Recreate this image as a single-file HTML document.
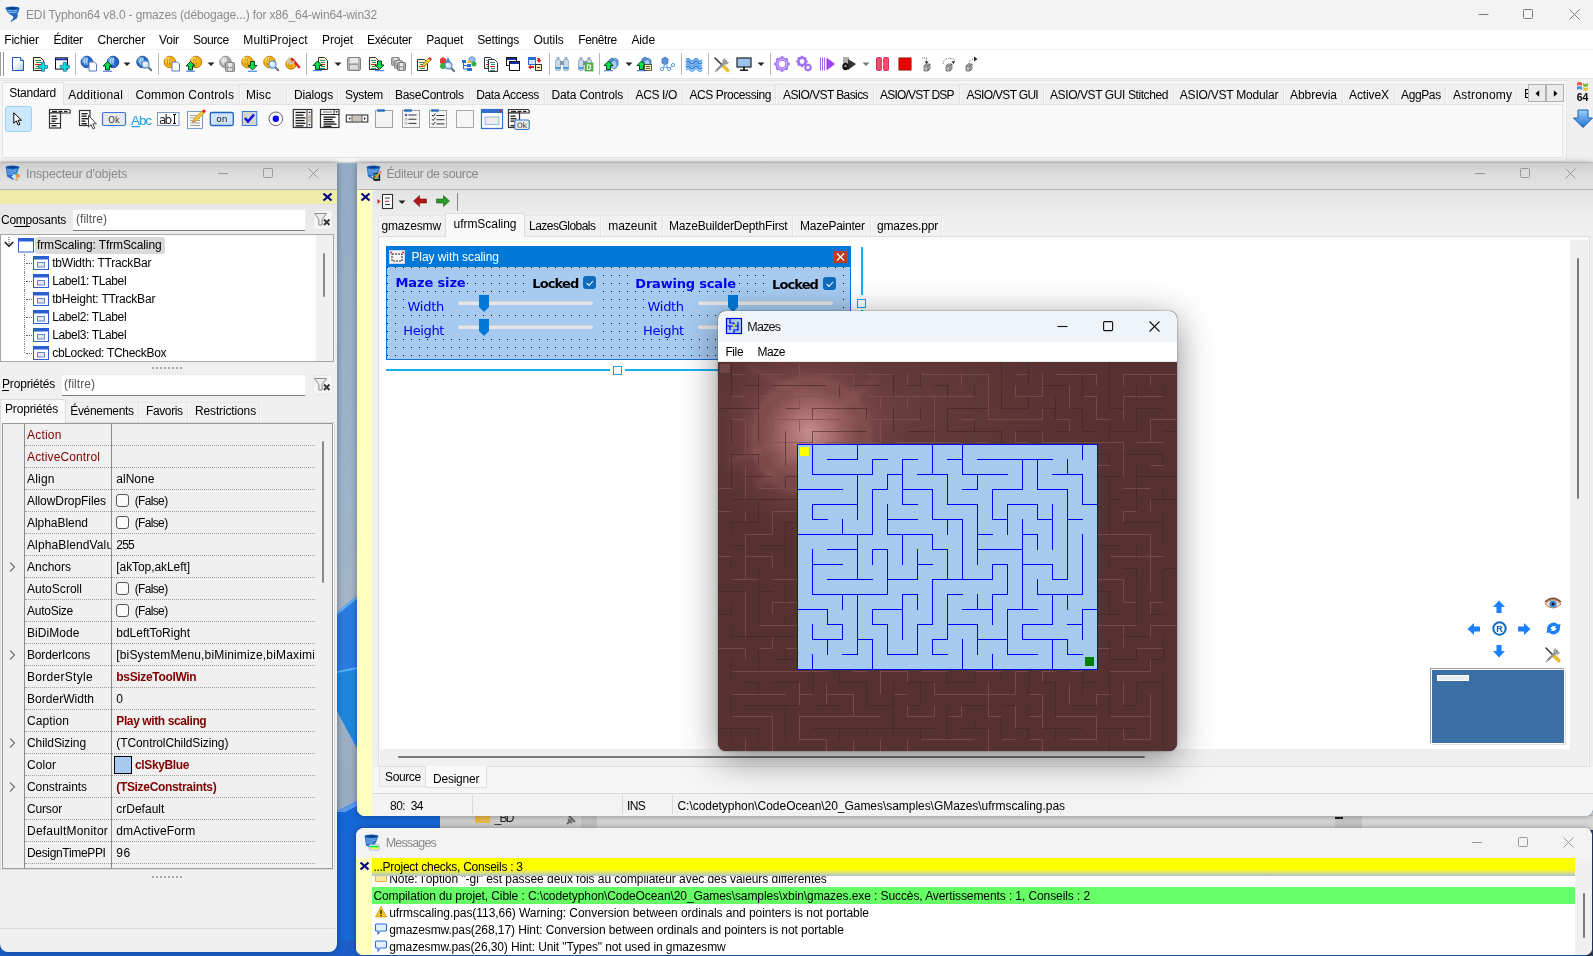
<!DOCTYPE html>
<html><head><meta charset="utf-8"><title>EDI Typhon64</title>
<style>
html,body{margin:0;padding:0;}
body{width:1593px;height:956px;overflow:hidden;position:relative;background:#9db4c8;font-family:"Liberation Sans",sans-serif;font-size:12px;}
#r{position:absolute;left:0;top:0;width:1593px;height:956px;overflow:hidden;will-change:transform;}
#r div,#r span,#r svg{position:absolute;box-sizing:border-box;}
#r span{white-space:pre;}
#r svg{overflow:visible;}
</style></head><body><div id="r">
<div style="left:0px;top:160px;width:1593px;height:796px;background:linear-gradient(180deg,#94acc4 0%,#9cb3c9 40%,#a3b4c6 55%,#8fa6be 100%);"></div>
<svg style="left:330px;top:560px;" width="40" height="400" viewBox="0 0 40 400"><polygon points="7,52 27,36 27,188 7,151" fill="#2a7be0"/><polygon points="7,112 27,108 27,188 7,151" fill="#1f86dd"/><polygon points="7,52 27,36 27,39 7,55" fill="#62aaf0"/><polygon points="7,111 27,107 27,109 7,113" fill="#5ab0f0"/><polygon points="7,251 27,241 27,400 7,400" fill="#1767d6"/><polygon points="7,251 27,241 27,246 7,256" fill="#5a9ae6"/></svg>
<div style="left:337px;top:812px;width:110px;height:20px;background:#1566d6;"></div>
<div style="left:0px;top:940px;width:1593px;height:16px;background:#1c5fc8;"></div>
<div style="left:1586px;top:826px;width:7px;height:130px;background:#2a3a5a;"></div>
<div style="left:440px;top:812px;width:1153px;height:18px;background:#d4d4d4;"></div>
<div style="left:440px;top:812px;width:141px;height:18px;background:#cecece;"></div>
<div style="left:581px;top:812px;width:16px;height:18px;background:#c2c2c2;"></div>
<div style="left:1335px;top:812px;width:27px;height:18px;background:#c6c6c6;"></div>
<div style="left:1362px;top:815px;width:231px;height:13px;background:#d8d8d8;border-top:1px solid #bbb;"></div>
<svg style="left:475px;top:810px;" width="15" height="14" viewBox="0 0 15 14"><path d="M0 0h6l2 2h7v11H0z" fill="#e8b84a"/></svg>
<span style="left:494.7px;top:810.84px;font-size:12px;line-height:14px;color:#222;letter-spacing:-1.781px;">_BD</span>
<svg style="left:565px;top:814px;" width="12" height="12" viewBox="0 0 12 12"><path d="M2 10L6 6M4 2l6 6M3 5l4 4" stroke="#666" stroke-width="2" fill="none"/></svg>
<div style="left:1335px;top:817px;width:8px;height:2px;background:#222;"></div>
<div style="left:0px;top:0px;width:1593px;height:163px;background:#f5f5f5;"></div>
<div style="left:0px;top:0px;width:1593px;height:30px;background:#f3f3f3;"></div>
<div style="left:0px;top:30px;width:1593px;height:19px;background:#fff;"></div>
<div style="left:0px;top:49px;width:1593px;height:1px;background:#f0f0f0;"></div>
<div style="left:0px;top:50px;width:1593px;height:28px;background:#fff;"></div>
<div style="left:0px;top:78px;width:1593px;height:1px;background:#e3e3e3;"></div>
<div style="left:0px;top:79px;width:1593px;height:84px;background:#f0f0f0;"></div>
<div style="left:0px;top:80px;width:1567px;height:82px;background:#f5f5f5;border:1px solid #e6e6e6;border-left:none;"></div>
<div style="left:0px;top:162px;width:1593px;height:1px;background:#d4d4d4;"></div>
<svg style="left:5px;top:5.5px;" width="16" height="17" viewBox="0 0 16 17"><defs><linearGradient id="tg" x1="0" y1="0" x2="0" y2="1"><stop offset="0" stop-color="#2f7bd2"/><stop offset="1" stop-color="#1a56a8"/></linearGradient></defs><path d="M0.500 2.500Q2 6.500 5 8.500Q8.500 10 8.500 11.500Q8 13 6.200 14.500Q5.500 15.500 6.300 16Q8 14 11.500 12.800Q13.500 10.500 12.500 7.500Q14.500 5 14.500 2.500Z" fill="url(#tg)"/><ellipse cx="7.500" cy="2.300" rx="7" ry="1.700" fill="#1458b0"/><ellipse cx="7.500" cy="2.200" rx="4.500" ry="0.800" fill="#0c3a80"/><path d="M2.500 4.500q5 1.200 10-0.300M3.500 6.300q4 1 8-0.300" stroke="#8ec0f4" stroke-width="0.900" fill="none"/></svg>
<span style="left:26px;top:7.84px;font-size:12px;line-height:14px;color:#8c8c8c;letter-spacing:-0.143px;">EDI Typhon64 v8.0 - gmazes (débogage...) for x86_64-win64-win32</span>
<svg style="left:1478px;top:8px;" width="12" height="12" viewBox="0 0 12 12"><path d="M0.5 6.5h10" stroke="#7c7c7c" stroke-width="1" fill="none"/></svg>
<svg style="left:1523px;top:9px;" width="11" height="11" viewBox="0 0 11 11"><rect x="0.5" y="0.5" width="9" height="9" rx="1" stroke="#7c7c7c" fill="none"/></svg>
<svg style="left:1569px;top:9px;" width="11" height="11" viewBox="0 0 11 11"><path d="M0.5 0.5l10 10M10.5 0.5l-10 10" stroke="#7c7c7c" fill="none"/></svg>
<span style="left:4.3px;top:32.84px;font-size:12px;line-height:14px;color:#000;letter-spacing:-0.215px;">Fichier</span>
<span style="left:53.4px;top:32.84px;font-size:12px;line-height:14px;color:#000;letter-spacing:-0.325px;">Éditer</span>
<span style="left:97.5px;top:32.84px;font-size:12px;line-height:14px;color:#000;letter-spacing:-0.232px;">Chercher</span>
<span style="left:159px;top:32.84px;font-size:12px;line-height:14px;color:#000;letter-spacing:-0.195px;">Voir</span>
<span style="left:193px;top:32.84px;font-size:12px;line-height:14px;color:#000;letter-spacing:-0.370px;">Source</span>
<span style="left:243.3px;top:32.84px;font-size:12px;line-height:14px;color:#000;letter-spacing:0.151px;">MultiProject</span>
<span style="left:322.1px;top:32.84px;font-size:12px;line-height:14px;color:#000;letter-spacing:-0.075px;">Projet</span>
<span style="left:367px;top:32.84px;font-size:12px;line-height:14px;color:#000;letter-spacing:-0.332px;">Exécuter</span>
<span style="left:426.3px;top:32.84px;font-size:12px;line-height:14px;color:#000;letter-spacing:-0.189px;">Paquet</span>
<span style="left:477.3px;top:32.84px;font-size:12px;line-height:14px;color:#000;letter-spacing:-0.207px;">Settings</span>
<span style="left:533.5px;top:32.84px;font-size:12px;line-height:14px;color:#000;letter-spacing:-0.079px;">Outils</span>
<span style="left:578.2px;top:32.84px;font-size:12px;line-height:14px;color:#000;letter-spacing:-0.379px;">Fenêtre</span>
<span style="left:631.4px;top:32.84px;font-size:12px;line-height:14px;color:#000;letter-spacing:-0.104px;">Aide</span>
<div style="left:0px;top:52px;width:1px;height:24px;background:#a0a0a0;"></div>
<div style="left:3px;top:52px;width:1px;height:24px;background:#909090;"></div>
<div style="left:75px;top:53px;width:1px;height:22px;background:#b8b8b8;"></div>
<div style="left:158px;top:53px;width:1px;height:22px;background:#b8b8b8;"></div>
<div style="left:306px;top:53px;width:1px;height:22px;background:#b8b8b8;"></div>
<div style="left:411px;top:53px;width:1px;height:22px;background:#b8b8b8;"></div>
<div style="left:549px;top:53px;width:1px;height:22px;background:#b8b8b8;"></div>
<div style="left:599px;top:53px;width:1px;height:22px;background:#b8b8b8;"></div>
<div style="left:681px;top:53px;width:1px;height:22px;background:#b8b8b8;"></div>
<div style="left:708px;top:53px;width:1px;height:22px;background:#b8b8b8;"></div>
<div style="left:770px;top:53px;width:1px;height:22px;background:#b8b8b8;"></div>
<div style="left:2px;top:104px;width:1561px;height:54px;background:#f9f9f9;border:1px solid #e4e4e4;"></div>
<div style="left:2px;top:84px;width:1526px;height:20px;background:#f0f0f0;border-top:1px solid #e6e6e6;"></div>
<div style="left:128px;top:85px;width:1px;height:19px;background:#e4e4e4;"></div>
<div style="left:129px;top:85px;width:1px;height:19px;background:#f8f8f8;"></div>
<div style="left:239px;top:85px;width:1px;height:19px;background:#e4e4e4;"></div>
<div style="left:240px;top:85px;width:1px;height:19px;background:#f8f8f8;"></div>
<div style="left:286px;top:85px;width:1px;height:19px;background:#e4e4e4;"></div>
<div style="left:287px;top:85px;width:1px;height:19px;background:#f8f8f8;"></div>
<div style="left:337px;top:85px;width:1px;height:19px;background:#e4e4e4;"></div>
<div style="left:338px;top:85px;width:1px;height:19px;background:#f8f8f8;"></div>
<div style="left:389px;top:85px;width:1px;height:19px;background:#e4e4e4;"></div>
<div style="left:390px;top:85px;width:1px;height:19px;background:#f8f8f8;"></div>
<div style="left:469px;top:85px;width:1px;height:19px;background:#e4e4e4;"></div>
<div style="left:470px;top:85px;width:1px;height:19px;background:#f8f8f8;"></div>
<div style="left:544px;top:85px;width:1px;height:19px;background:#e4e4e4;"></div>
<div style="left:545px;top:85px;width:1px;height:19px;background:#f8f8f8;"></div>
<div style="left:628px;top:85px;width:1px;height:19px;background:#e4e4e4;"></div>
<div style="left:629px;top:85px;width:1px;height:19px;background:#f8f8f8;"></div>
<div style="left:682px;top:85px;width:1px;height:19px;background:#e4e4e4;"></div>
<div style="left:683px;top:85px;width:1px;height:19px;background:#f8f8f8;"></div>
<div style="left:775px;top:85px;width:1px;height:19px;background:#e4e4e4;"></div>
<div style="left:776px;top:85px;width:1px;height:19px;background:#f8f8f8;"></div>
<div style="left:873px;top:85px;width:1px;height:19px;background:#e4e4e4;"></div>
<div style="left:874px;top:85px;width:1px;height:19px;background:#f8f8f8;"></div>
<div style="left:959px;top:85px;width:1px;height:19px;background:#e4e4e4;"></div>
<div style="left:960px;top:85px;width:1px;height:19px;background:#f8f8f8;"></div>
<div style="left:1043px;top:85px;width:1px;height:19px;background:#e4e4e4;"></div>
<div style="left:1044px;top:85px;width:1px;height:19px;background:#f8f8f8;"></div>
<div style="left:1173px;top:85px;width:1px;height:19px;background:#e4e4e4;"></div>
<div style="left:1174px;top:85px;width:1px;height:19px;background:#f8f8f8;"></div>
<div style="left:1283px;top:85px;width:1px;height:19px;background:#e4e4e4;"></div>
<div style="left:1284px;top:85px;width:1px;height:19px;background:#f8f8f8;"></div>
<div style="left:1342px;top:85px;width:1px;height:19px;background:#e4e4e4;"></div>
<div style="left:1343px;top:85px;width:1px;height:19px;background:#f8f8f8;"></div>
<div style="left:1394px;top:85px;width:1px;height:19px;background:#e4e4e4;"></div>
<div style="left:1395px;top:85px;width:1px;height:19px;background:#f8f8f8;"></div>
<div style="left:1445px;top:85px;width:1px;height:19px;background:#e4e4e4;"></div>
<div style="left:1446px;top:85px;width:1px;height:19px;background:#f8f8f8;"></div>
<div style="left:1516px;top:85px;width:1px;height:19px;background:#e4e4e4;"></div>
<div style="left:1517px;top:85px;width:1px;height:19px;background:#f8f8f8;"></div>
<div style="left:2px;top:82px;width:62px;height:23px;background:#f9f9f9;border:1px solid #e0e0e0;border-bottom:none;border-radius:2px 2px 0 0;"></div>
<span style="left:9.3px;top:86.14px;font-size:12px;line-height:14px;color:#000;letter-spacing:-0.275px;">Standard</span>
<span style="left:68.3px;top:88.14px;font-size:12px;line-height:14px;color:#000;letter-spacing:0.199px;">Additional</span>
<span style="left:135.5px;top:88.14px;font-size:12px;line-height:14px;color:#000;letter-spacing:0.120px;">Common Controls</span>
<span style="left:246px;top:88.14px;font-size:12px;line-height:14px;color:#000;letter-spacing:0.084px;">Misc</span>
<span style="left:294px;top:88.14px;font-size:12px;line-height:14px;color:#000;letter-spacing:-0.146px;">Dialogs</span>
<span style="left:345px;top:88.14px;font-size:12px;line-height:14px;color:#000;letter-spacing:-0.335px;">System</span>
<span style="left:395px;top:88.14px;font-size:12px;line-height:14px;color:#000;letter-spacing:-0.278px;">BaseControls</span>
<span style="left:476.2px;top:88.14px;font-size:12px;line-height:14px;color:#000;letter-spacing:-0.354px;">Data Access</span>
<span style="left:551.4px;top:88.14px;font-size:12px;line-height:14px;color:#000;letter-spacing:-0.120px;">Data Controls</span>
<span style="left:635.5px;top:88.14px;font-size:12px;line-height:14px;color:#000;letter-spacing:-0.359px;">ACS I/O</span>
<span style="left:689.5px;top:88.14px;font-size:12px;line-height:14px;color:#000;letter-spacing:-0.419px;">ACS Processing</span>
<span style="left:783px;top:88.14px;font-size:12px;line-height:14px;color:#000;letter-spacing:-0.587px;">ASIO/VST Basics</span>
<span style="left:880px;top:88.14px;font-size:12px;line-height:14px;color:#000;letter-spacing:-0.787px;">ASIO/VST DSP</span>
<span style="left:966.5px;top:88.14px;font-size:12px;line-height:14px;color:#000;letter-spacing:-0.692px;">ASIO/VST GUI</span>
<span style="left:1050px;top:88.14px;font-size:12px;line-height:14px;color:#000;letter-spacing:-0.404px;">ASIO/VST GUI Stitched</span>
<span style="left:1179.8px;top:88.14px;font-size:12px;line-height:14px;color:#000;letter-spacing:-0.214px;">ASIO/VST Modular</span>
<span style="left:1290px;top:88.14px;font-size:12px;line-height:14px;color:#000;letter-spacing:-0.045px;">Abbrevia</span>
<span style="left:1349px;top:88.14px;font-size:12px;line-height:14px;color:#000;letter-spacing:-0.097px;">ActiveX</span>
<span style="left:1401px;top:88.14px;font-size:12px;line-height:14px;color:#000;letter-spacing:-0.372px;">AggPas</span>
<span style="left:1453px;top:88.14px;font-size:12px;line-height:14px;color:#000;letter-spacing:0.216px;">Astronomy</span>
<div style="left:1524px;top:87px;width:5px;height:14px;overflow:hidden;"><span style="left:0;top:0;font-size:12px;line-height:14px;">B</span></div>
<div style="left:1528px;top:84px;width:18px;height:18px;background:#ebebeb;border:1px solid #b0b0b0;"></div>
<div style="left:1546px;top:84px;width:18px;height:18px;background:#ebebeb;border:1px solid #b0b0b0;"></div>
<svg style="left:1534.5px;top:89.5px;" width="5" height="7" viewBox="0 0 5 7"><path d="M4.200 0.300v6.400L0.500 3.500z" fill="#000"/></svg>
<svg style="left:1552.5px;top:89.5px;" width="5" height="7" viewBox="0 0 5 7"><path d="M0.800 0.300v6.400L4.500 3.500z" fill="#000"/></svg>
<svg style="left:1576px;top:81px;" width="13" height="10" viewBox="0 0 13 10"><path d="M1 2q2-2 5 0v3q-3-2-5 0z" fill="#e8543a"/><path d="M7 2q2 2 5 0v3q-3 2-5 0z" fill="#7cba3d"/><path d="M1 6q2-2 5 0v3q-3-2-5 0z" fill="#3d8fe0"/><path d="M7 6q2 2 5 0v3q-3 2-5 0z" fill="#f2c230"/></svg>
<span style="left:1576.7px;top:91.46px;font-size:10.5px;line-height:13px;color:#000;letter-spacing:-0.040px;font-weight:bold;">64</span>
<svg style="left:1573px;top:109px;" width="20" height="20" viewBox="0 0 20 20"><defs><linearGradient id="ga" x1="0" y1="0" x2="0" y2="1"><stop offset="0" stop-color="#9fd0ff"/><stop offset="1" stop-color="#1d6fd0"/></linearGradient></defs><path d="M5 1h10v8h4.5L10 18.5 0.5 9H5z" fill="url(#ga)" stroke="#1a5fb0" stroke-width="1"/></svg>
<div style="left:5px;top:106px;width:27px;height:26px;background:#cce8ff;border:1px solid #99d1ff;border-radius:3px;"></div>
<svg style="left:13px;top:112px;" width="10" height="15" viewBox="0 0 10 15"><path d="M0.800 0.800v10.500l2.500-2.400 1.800 4.200 1.700-0.800-1.800-4.100h3.500z" fill="#fff" stroke="#000" stroke-width="1"/></svg>
<svg style="left:9px;top:56px;" width="16" height="16" viewBox="0 0 16 16"><defs><linearGradient id="pg" x1="0" y1="0" x2="1" y2="1"><stop offset="0.4" stop-color="#fff"/><stop offset="1" stop-color="#a8c4ec"/></linearGradient></defs><path d="M3.5 1.5h8l3 3v10h-11z" fill="url(#pg)" stroke="#2458b0" stroke-width="1"/><path d="M11.5 1.5v3h3" fill="#dfe8f8" stroke="#2458b0" stroke-width="1"/></svg>
<svg style="left:31px;top:56px;" width="16" height="16" viewBox="0 0 16 16"><path d="M2.5 1.5h7l3 3v10h-10z" fill="#fffbd0" stroke="#222" stroke-width="1"/><rect x="4" y="4" width="6" height="1" fill="#2a8f8a"/><rect x="5" y="6" width="5" height="1" fill="#2a8f8a"/><rect x="4" y="8" width="6" height="1" fill="#d02020"/><rect x="5" y="10" width="5" height="1" fill="#2a8f8a"/><rect x="4" y="12" width="6" height="1" fill="#2a8f8a"/><path d="M10.5 6.3h3v3h3v3h-3v3h-3v-3h-3v-3h3z" fill="#00dede" stroke="#3a6a9a" stroke-width="0.8"/></svg>
<svg style="left:53px;top:56px;" width="16" height="16" viewBox="0 0 16 16"><rect x="2.5" y="1.8" width="12" height="11.3" fill="#fff" stroke="#111"/><rect x="3" y="2.3" width="11" height="2" fill="#1b2fa8"/><path d="M10.3 6.3h3v3h3v3h-3v3h-3v-3h-3v-3h3z" fill="#00dede" stroke="#3a6a9a" stroke-width="0.8"/></svg>
<svg style="left:80px;top:56px;" width="16" height="16" viewBox="0 0 16 16"><circle cx="6.8" cy="6" r="5.8" fill="#2268cc" stroke="#163f8a" stroke-width="0.8"/><circle cx="5.06" cy="4.26" r="3.19" fill="#7db8f0" opacity="0.8"/><path d="M5.06 2.52q-2 3 0 6.38M7.3 1.9400000000000004q-1.5 3 0 6.96" stroke="#fff" stroke-width="0.8" fill="none" opacity="0.9"/><path d="M9.0 6.0h5.5l2 2v7h-7.5z" fill="#fff" stroke="#5a78b8" stroke-width="1"/></svg>
<svg style="left:103px;top:56px;" width="16" height="16" viewBox="0 0 16 16"><circle cx="10" cy="6" r="5.8" fill="#2268cc" stroke="#163f8a" stroke-width="0.8"/><circle cx="8.26" cy="4.26" r="3.19" fill="#7db8f0" opacity="0.8"/><path d="M8.26 2.52q-2 3 0 6.38M10.5 1.9400000000000004q-1.5 3 0 6.96" stroke="#fff" stroke-width="0.8" fill="none" opacity="0.9"/><path d="M4.5 5.5l4.5 4.5h-2.5v4h-4v-4h-2.5z" fill="#00e050" stroke="#062a0c" stroke-width="0.9"/><rect x="0" y="14.7" width="9" height="1" fill="#2a6fe0"/></svg>
<svg style="left:136px;top:56px;" width="16" height="16" viewBox="0 0 16 16"><circle cx="6.5" cy="6" r="5.8" fill="#2268cc" stroke="#163f8a" stroke-width="0.8"/><circle cx="4.76" cy="4.26" r="3.19" fill="#7db8f0" opacity="0.8"/><path d="M4.76 2.52q-2 3 0 6.38M7.0 1.9400000000000004q-1.5 3 0 6.96" stroke="#fff" stroke-width="0.8" fill="none" opacity="0.9"/><path d="M12.02 11.02l3.2 3.2" stroke="#6f7680" stroke-width="2.2" stroke-linecap="round"/><circle cx="9.5" cy="8.5" r="3.6" fill="#cfe6fa" stroke="#5e8fc0" stroke-width="1.2"/><circle cx="8.5" cy="7.5" r="1.62" fill="#fff" opacity="0.8"/></svg>
<svg style="left:163px;top:56px;" width="16" height="16" viewBox="0 0 16 16"><circle cx="6.8" cy="6" r="5.8" fill="#f5b000" stroke="#a86a08" stroke-width="0.8"/><circle cx="5.06" cy="4.26" r="3.19" fill="#ffe060" opacity="0.8"/><path d="M5.06 2.52q-2 3 0 6.38M7.3 1.9400000000000004q-1.5 3 0 6.96" stroke="#a86a08" stroke-width="0.8" fill="none" opacity="0.9"/><path d="M9.0 6.0h5.5l2 2v7h-7.5z" fill="#fff" stroke="#5a78b8" stroke-width="1"/></svg>
<svg style="left:186px;top:56px;" width="16" height="16" viewBox="0 0 16 16"><circle cx="10" cy="6" r="5.8" fill="#f5b000" stroke="#a86a08" stroke-width="0.8"/><circle cx="8.26" cy="4.26" r="3.19" fill="#ffe060" opacity="0.8"/><path d="M8.26 2.52q-2 3 0 6.38M10.5 1.9400000000000004q-1.5 3 0 6.96" stroke="#a86a08" stroke-width="0.8" fill="none" opacity="0.9"/><path d="M4.5 5.5l4.5 4.5h-2.5v4h-4v-4h-2.5z" fill="#00e050" stroke="#062a0c" stroke-width="0.9"/><rect x="0" y="14.7" width="9" height="1" fill="#2a6fe0"/></svg>
<svg style="left:219px;top:56px;" width="16" height="16" viewBox="0 0 16 16"><circle cx="6.5" cy="6" r="5.8" fill="#a8a8a8" stroke="#808080" stroke-width="0.8"/><circle cx="4.76" cy="4.26" r="3.19" fill="#e0e0e0" opacity="0.8"/><path d="M4.76 2.52q-2 3 0 6.38M7.0 1.9400000000000004q-1.5 3 0 6.96" stroke="#fff" stroke-width="0.8" fill="none" opacity="0.9"/><rect x="6.5" y="6.5" width="9" height="9" rx="1" fill="#b4b4b4" stroke="#808080"/><rect x="9" y="7" width="4" height="3.5999999999999996" fill="#e8e8e8"/><rect x="8.5" y="11.5" width="5" height="3.8" fill="#dcdcdc" stroke="#808080" stroke-width="0.6"/></svg>
<svg style="left:241px;top:56px;" width="16" height="16" viewBox="0 0 16 16"><circle cx="6.5" cy="6" r="5.8" fill="#f5b000" stroke="#a86a08" stroke-width="0.8"/><circle cx="4.76" cy="4.26" r="3.19" fill="#ffe060" opacity="0.8"/><path d="M4.76 2.52q-2 3 0 6.38M7.0 1.9400000000000004q-1.5 3 0 6.96" stroke="#a86a08" stroke-width="0.8" fill="none" opacity="0.9"/><path d="M11.5 14.0l4.5 -4.5h-2.5v-4h-4v4h-2.5z" fill="#00e050" stroke="#062a0c" stroke-width="0.9"/><rect x="7" y="14.7" width="9" height="1" fill="#2a6fe0"/></svg>
<svg style="left:263px;top:56px;" width="16" height="16" viewBox="0 0 16 16"><circle cx="6.5" cy="6" r="5.8" fill="#f5b000" stroke="#a86a08" stroke-width="0.8"/><circle cx="4.76" cy="4.26" r="3.19" fill="#ffe060" opacity="0.8"/><path d="M4.76 2.52q-2 3 0 6.38M7.0 1.9400000000000004q-1.5 3 0 6.96" stroke="#a86a08" stroke-width="0.8" fill="none" opacity="0.9"/><path d="M12.02 11.02l3.2 3.2" stroke="#6f7680" stroke-width="2.2" stroke-linecap="round"/><circle cx="9.5" cy="8.5" r="3.6" fill="#cfe6fa" stroke="#5e8fc0" stroke-width="1.2"/><circle cx="8.5" cy="7.5" r="1.62" fill="#fff" opacity="0.8"/></svg>
<svg style="left:285px;top:56px;" width="16" height="16" viewBox="0 0 16 16"><circle cx="6" cy="8" r="5.2" fill="#f5b000" stroke="#a86a08" stroke-width="0.8"/><circle cx="4.4399999999999995" cy="6.4399999999999995" r="2.8600000000000003" fill="#ffe060" opacity="0.8"/><path d="M4.4399999999999995 4.88q-2 3 0 5.720000000000001M6.5 4.36q-1.5 3 0 6.24" stroke="#a86a08" stroke-width="0.8" fill="none" opacity="0.9"/><path d="M7 3l7 8" stroke="#e02828" stroke-width="2.6" stroke-linecap="round"/><path d="M5 1.5a3 3 0 1 0 4 3.5" fill="none" stroke="#c8ccd2" stroke-width="1.8"/></svg>
<svg style="left:313px;top:56px;" width="16" height="16" viewBox="0 0 16 16"><path d="M5.5 1.5h6l3 3v9h-9z" fill="#fdf6d0" stroke="#333" stroke-width="1"/><rect x="7" y="4" width="5" height="1" fill="#2a8f8a"/><rect x="8" y="6" width="4" height="1" fill="#2a8f8a"/><rect x="7" y="8" width="5" height="1" fill="#d02020"/><rect x="8" y="10" width="4" height="1" fill="#2a8f8a"/><rect x="7" y="12" width="5" height="1" fill="#2a8f8a"/><path d="M4.5 5l4.5 4.5h-2.5v4h-4v-4h-2.5z" fill="#00e050" stroke="#062a0c" stroke-width="0.9"/><rect x="0" y="14.2" width="9" height="1" fill="#2a6fe0"/></svg>
<svg style="left:346px;top:56px;" width="16" height="16" viewBox="0 0 16 16"><rect x="1.5" y="1.5" width="13" height="13" rx="1" fill="#b4b4b4" stroke="#808080"/><rect x="4" y="2" width="8" height="5.04" fill="#e8e8e8"/><rect x="3.5" y="8.700000000000001" width="9" height="5.32" fill="#dcdcdc" stroke="#808080" stroke-width="0.6"/></svg>
<svg style="left:368px;top:56px;" width="16" height="16" viewBox="0 0 16 16"><path d="M1.5 1.5h6l3 3v9h-9z" fill="#fdf6d0" stroke="#333" stroke-width="1"/><rect x="3" y="4" width="5" height="1" fill="#2a8f8a"/><rect x="4" y="6" width="4" height="1" fill="#2a8f8a"/><rect x="3" y="8" width="5" height="1" fill="#d02020"/><rect x="4" y="10" width="4" height="1" fill="#2a8f8a"/><rect x="3" y="12" width="5" height="1" fill="#2a8f8a"/><path d="M11.5 13.5l4.5 -4.5h-2.5v-4h-4v4h-2.5z" fill="#00e050" stroke="#062a0c" stroke-width="0.9"/><rect x="7" y="14.2" width="9" height="1" fill="#2a6fe0"/></svg>
<svg style="left:390px;top:56px;" width="16" height="16" viewBox="0 0 16 16"><rect x="1.5" y="1.5" width="8" height="8" rx="1" fill="#b0b0b0" stroke="#888"/><rect x="4" y="2" width="3" height="3.2399999999999998" fill="#e8e8e8"/><rect x="3.5" y="5.95" width="4" height="3.42" fill="#dcdcdc" stroke="#888" stroke-width="0.6"/><rect x="4.5" y="4.5" width="8" height="8" rx="1" fill="#b0b0b0" stroke="#888"/><rect x="7" y="5" width="3" height="3.2399999999999998" fill="#e8e8e8"/><rect x="6.5" y="8.95" width="4" height="3.42" fill="#dcdcdc" stroke="#888" stroke-width="0.6"/><rect x="7.5" y="6.5" width="8" height="8" rx="1" fill="#a8a8a8" stroke="#777"/><rect x="10" y="7" width="3" height="3.2399999999999998" fill="#e8e8e8"/><rect x="9.5" y="10.95" width="4" height="3.42" fill="#dcdcdc" stroke="#777" stroke-width="0.6"/></svg>
<svg style="left:416px;top:56px;" width="16" height="16" viewBox="0 0 16 16"><path d="M1.5 3.5h7l3 3v8h-10z" fill="#fdf6d0" stroke="#333" stroke-width="1"/><rect x="3" y="6" width="6" height="1" fill="#2a8f8a"/><rect x="4" y="8" width="5" height="1" fill="#2a8f8a"/><rect x="3" y="10" width="6" height="1" fill="#d02020"/><rect x="4" y="12" width="5" height="1" fill="#2a8f8a"/><path d="M6 11l1-3 6-6 2 2-6 6z" fill="#f4c430" stroke="#a06a10" stroke-width="0.6"/><path d="M12.5 2.5l1.5-1.5 2 2-1.5 1.5z" fill="#e03030"/></svg>
<svg style="left:439px;top:56px;" width="16" height="16" viewBox="0 0 16 16"><path d="M1 3l3-2 3 2v4l-3 2-3-2z" fill="#e03a3a"/><path d="M9 1l3 6h-6z" fill="#3a8fe0"/><circle cx="4" cy="10" r="3" fill="#35b045"/><path d="M11.879999999999999 11.879999999999999l3.2 3.2" stroke="#6f7680" stroke-width="2.2" stroke-linecap="round"/><circle cx="9.5" cy="9.5" r="3.4" fill="#cfe6fa" stroke="#5e8fc0" stroke-width="1.2"/><circle cx="8.5" cy="8.5" r="1.53" fill="#fff" opacity="0.8"/></svg>
<svg style="left:461px;top:56px;" width="16" height="16" viewBox="0 0 16 16"><path d="M2.5 6v7h4M2.5 9.5h4" stroke="#2a6fd8" fill="none"/><rect x="1" y="4" width="4" height="3" fill="#2a6fd8"/><rect x="6" y="8" width="4" height="3" fill="#2a6fd8"/><rect x="6" y="12" width="5" height="3" fill="#2a6fd8"/><path d="M8 2l3-1.5 3 1.5v3l-3 1.5-3-1.5z" fill="#8fc0f0" stroke="#3a70b0" stroke-width="0.6"/><circle cx="13" cy="8" r="2.5" fill="#35b045"/><path d="M6 7l2-4 2 4z" fill="#f0c020"/></svg>
<svg style="left:483px;top:56px;" width="16" height="16" viewBox="0 0 16 16"><path d="M1.5 1.5h6l3 3v8h-9z" fill="#fff" stroke="#333" stroke-width="1"/><rect x="3" y="4" width="5" height="1" fill="#2a8f8a"/><rect x="4" y="6" width="4" height="1" fill="#2a8f8a"/><rect x="3" y="8" width="5" height="1" fill="#d02020"/><rect x="4" y="10" width="4" height="1" fill="#2a8f8a"/><path d="M5.5 3.5h6l3 3v9h-9z" fill="#fff" stroke="#333" stroke-width="1"/><rect x="7" y="6" width="5" height="1" fill="#2a8f8a"/><rect x="8" y="8" width="4" height="1" fill="#2a8f8a"/><rect x="7" y="10" width="5" height="1" fill="#d02020"/><rect x="8" y="12" width="4" height="1" fill="#2a8f8a"/><rect x="7" y="14" width="5" height="1" fill="#2a8f8a"/></svg>
<svg style="left:505px;top:56px;" width="16" height="16" viewBox="0 0 16 16"><rect x="1.5" y="1.5" width="10" height="8" fill="#fff" stroke="#111"/><rect x="2" y="2" width="9" height="2" fill="#1b2fa8"/><rect x="4.5" y="5.5" width="10" height="9" fill="#fff" stroke="#111"/><rect x="5" y="6" width="9" height="2" fill="#1b2fa8"/></svg>
<svg style="left:527px;top:56px;" width="16" height="16" viewBox="0 0 16 16"><rect x="1.5" y="1.5" width="7" height="7" fill="#cfe4fb" stroke="#2a6fd8"/><rect x="2" y="2" width="6" height="2" fill="#2a6fd8"/><rect x="8.500" y="8.5" width="6" height="6" fill="#fdf2b0" stroke="#333"/><rect x="10" y="11" width="3" height="1" fill="#333"/><path d="M10 2h3v2h1.500l-2.500 3-2.500-3h1.500z" fill="#e02020"/><path d="M1 11l3-2.500v1.500h3v2h-3v1.500z" fill="#e02020"/></svg>
<svg style="left:554px;top:56px;" width="16" height="16" viewBox="0 0 16 16"><rect x="1.5" y="3.5" width="5" height="11" rx="1.5" fill="#c8d9ea" stroke="#8fa8c0" stroke-width="0.8"/><rect x="9.5" y="3.5" width="5" height="11" rx="1.5" fill="#c8d9ea" stroke="#8fa8c0" stroke-width="0.8"/><rect x="2.5" y="1" width="3" height="3" fill="#9bb4cc"/><rect x="10.5" y="1" width="3" height="3" fill="#9bb4cc"/><rect x="6" y="5" width="4" height="4" fill="#7f9ab5"/><rect x="1.5" y="11" width="5" height="2" fill="#4a9ae8"/><rect x="9.5" y="11" width="5" height="2" fill="#4a9ae8"/></svg>
<svg style="left:577px;top:56px;" width="16" height="16" viewBox="0 0 16 16"><rect x="1.5" y="3.5" width="5" height="11" rx="1.5" fill="#c8d9ea" stroke="#8fa8c0" stroke-width="0.8"/><rect x="9.5" y="3.5" width="5" height="11" rx="1.5" fill="#c8d9ea" stroke="#8fa8c0" stroke-width="0.8"/><rect x="2.5" y="1" width="3" height="3" fill="#9bb4cc"/><rect x="10.5" y="1" width="3" height="3" fill="#9bb4cc"/><rect x="6" y="5" width="4" height="4" fill="#7f9ab5"/><rect x="1.5" y="11" width="5" height="2" fill="#4a9ae8"/><rect x="9.5" y="11" width="5" height="2" fill="#4a9ae8"/><rect x="8" y="7" width="8" height="8" fill="#5cc04a" stroke="#2a8a20" stroke-width="0.6"/><path d="M10.500 9v4.500h2a1.200 1.200 0 0 0 0-2.300 1.100 1.100 0 0 0 0-2.200z" fill="none" stroke="#fff" stroke-width="1.100"/></svg>
<svg style="left:604px;top:56px;" width="16" height="16" viewBox="0 0 16 16"><path d="M5 4l3-2 3 2v5l-3 2-3-2z" fill="#5b97d8" stroke="#2a5fa8" stroke-width="0.7"/><path d="M8 4l3-2 3 2v5l-3 2-3-2z" fill="#7fb3ea" stroke="#2a5fa8" stroke-width="0.7"/><path d="M7 6l3-2 3 2v5l-3 2-3-2z" fill="#a9cdf2" stroke="#2a5fa8" stroke-width="0.7"/><path d="M4.5 5l4.5 4.5h-2.5v4h-4v-4h-2.5z" fill="#00e050" stroke="#062a0c" stroke-width="0.9"/><rect x="0" y="14.2" width="9" height="1" fill="#2a6fe0"/></svg>
<svg style="left:637px;top:56px;" width="16" height="16" viewBox="0 0 16 16"><path d="M5 3l3-2 3 2v5l-3 2-3-2z" fill="#5b97d8" stroke="#2a5fa8" stroke-width="0.7"/><path d="M8 4l3-2 3 2v5l-3 2-3-2z" fill="#7fb3ea" stroke="#2a5fa8" stroke-width="0.7"/><path d="M7 5l3-2 3 2v5l-3 2-3-2z" fill="#a9cdf2" stroke="#2a5fa8" stroke-width="0.7"/><path d="M4.5 5l4.5 4.5h-2.5v4h-4v-4h-2.5z" fill="#00e050" stroke="#062a0c" stroke-width="0.9"/><rect x="0" y="14.2" width="9" height="1" fill="#2a6fe0"/><rect x="7.500" y="8.500" width="7" height="6" fill="#fdf2b0" stroke="#333" stroke-width="0.8"/><path d="M9 10.500h4M9 12.500h4" stroke="#333" stroke-width="0.8"/></svg>
<svg style="left:659px;top:56px;" width="16" height="16" viewBox="0 0 16 16"><path d="M3 3l3-2 3 2v4l-3 2-3-2z" fill="#5b97d8" stroke="#2a5fa8" stroke-width="0.7"/><path d="M3 13l3-3 4 3 4-4" stroke="#58a0e8" fill="none"/><circle cx="3" cy="13" r="1.600" fill="#fff" stroke="#58a0e8"/><circle cx="6.500" cy="10" r="1.600" fill="#fff" stroke="#58a0e8"/><circle cx="10" cy="13" r="1.600" fill="#fff" stroke="#58a0e8"/><circle cx="14" cy="9" r="1.600" fill="#fff" stroke="#58a0e8"/></svg>
<svg style="left:686px;top:56px;" width="16" height="16" viewBox="0 0 16 16"><path d="M0 4q2-2.500 4 0t4 0t4 0t4 0" stroke="#5aa0ea" stroke-width="1.800" fill="none"/><path d="M0 6.5q2-2.500 4 0t4 0t4 0t4 0" stroke="#2f7fe0" stroke-width="1.800" fill="none"/><path d="M0 9q2-2.500 4 0t4 0t4 0t4 0" stroke="#5aa0ea" stroke-width="1.800" fill="none"/><path d="M0 11.5q2-2.500 4 0t4 0t4 0t4 0" stroke="#2f7fe0" stroke-width="1.800" fill="none"/><path d="M0 14q2-2.500 4 0t4 0t4 0t4 0" stroke="#7ab8f0" stroke-width="1.800" fill="none"/></svg>
<svg style="left:713px;top:56px;" width="16" height="16" viewBox="0 0 16 16"><path d="M2 2l7.500 7.500" stroke="#333" stroke-width="1.500" stroke-linecap="round"/><path d="M10 10l5 5" stroke="#f2c020" stroke-width="3" stroke-linecap="round"/><path d="M10 10l5 5" stroke="#b8860b" stroke-width="0.600" transform="translate(1.100 -1.100)"/><path d="M13 5l-10 10" stroke="#8a8e94" stroke-width="2.400" stroke-linecap="round"/><path d="M11.500 2.500a3 3 0 1 0 4 4l-2.200-0.300-1.500-1.500z" fill="#a8acb2" stroke="#666" stroke-width="0.500"/><circle cx="3.300" cy="14.700" r="0.800" fill="#fff"/></svg>
<svg style="left:736px;top:56px;" width="16" height="16" viewBox="0 0 16 16"><rect x="1" y="2" width="14" height="9" fill="#9cc4ee" stroke="#222" stroke-width="1.200"/><rect x="7" y="11" width="2" height="3" fill="#222"/><rect x="4" y="13.500" width="8" height="1.500" fill="#222"/></svg>
<svg style="left:774px;top:56px;" width="16" height="16" viewBox="0 0 16 16"><rect x="6.64" y="0.25" width="2.73" height="3.72" fill="#a070f0" transform="rotate(0 8 8)"/><rect x="6.64" y="0.25" width="2.73" height="3.72" fill="#a070f0" transform="rotate(45 8 8)"/><rect x="6.64" y="0.25" width="2.73" height="3.72" fill="#a070f0" transform="rotate(90 8 8)"/><rect x="6.64" y="0.25" width="2.73" height="3.72" fill="#a070f0" transform="rotate(135 8 8)"/><rect x="6.64" y="0.25" width="2.73" height="3.72" fill="#a070f0" transform="rotate(180 8 8)"/><rect x="6.64" y="0.25" width="2.73" height="3.72" fill="#a070f0" transform="rotate(225 8 8)"/><rect x="6.64" y="0.25" width="2.73" height="3.72" fill="#a070f0" transform="rotate(270 8 8)"/><rect x="6.64" y="0.25" width="2.73" height="3.72" fill="#a070f0" transform="rotate(315 8 8)"/><circle cx="8" cy="8" r="4.96" fill="none" stroke="#a070f0" stroke-width="3.41"/><circle cx="8" cy="8" r="4.900" fill="none" stroke="#c8b0ff" stroke-width="1.200"/></svg>
<svg style="left:796px;top:56px;" width="16" height="16" viewBox="0 0 16 16"><rect x="4.99" y="-0.25" width="2.02" height="2.76" fill="#a070f0" transform="rotate(0 6 5.5)"/><rect x="4.99" y="-0.25" width="2.02" height="2.76" fill="#a070f0" transform="rotate(45 6 5.5)"/><rect x="4.99" y="-0.25" width="2.02" height="2.76" fill="#a070f0" transform="rotate(90 6 5.5)"/><rect x="4.99" y="-0.25" width="2.02" height="2.76" fill="#a070f0" transform="rotate(135 6 5.5)"/><rect x="4.99" y="-0.25" width="2.02" height="2.76" fill="#a070f0" transform="rotate(180 6 5.5)"/><rect x="4.99" y="-0.25" width="2.02" height="2.76" fill="#a070f0" transform="rotate(225 6 5.5)"/><rect x="4.99" y="-0.25" width="2.02" height="2.76" fill="#a070f0" transform="rotate(270 6 5.5)"/><rect x="4.99" y="-0.25" width="2.02" height="2.76" fill="#a070f0" transform="rotate(315 6 5.5)"/><circle cx="6" cy="5.5" r="3.68" fill="none" stroke="#a070f0" stroke-width="2.53"/><rect x="11.30" y="7.50" width="1.41" height="1.92" fill="#a070f0" transform="rotate(0 12 11.5)"/><rect x="11.30" y="7.50" width="1.41" height="1.92" fill="#a070f0" transform="rotate(45 12 11.5)"/><rect x="11.30" y="7.50" width="1.41" height="1.92" fill="#a070f0" transform="rotate(90 12 11.5)"/><rect x="11.30" y="7.50" width="1.41" height="1.92" fill="#a070f0" transform="rotate(135 12 11.5)"/><rect x="11.30" y="7.50" width="1.41" height="1.92" fill="#a070f0" transform="rotate(180 12 11.5)"/><rect x="11.30" y="7.50" width="1.41" height="1.92" fill="#a070f0" transform="rotate(225 12 11.5)"/><rect x="11.30" y="7.50" width="1.41" height="1.92" fill="#a070f0" transform="rotate(270 12 11.5)"/><rect x="11.30" y="7.50" width="1.41" height="1.92" fill="#a070f0" transform="rotate(315 12 11.5)"/><circle cx="12" cy="11.5" r="2.56" fill="none" stroke="#a070f0" stroke-width="1.76"/></svg>
<svg style="left:819px;top:56px;" width="16" height="16" viewBox="0 0 16 16"><path d="M1.500 1.500v13M3.500 1.500v13M5.500 1.500v13" stroke="#a050f0" stroke-width="0.900"/><path d="M7.500 1.500l8.500 6.500-8.500 6.500z" fill="#a040f0"/></svg>
<svg style="left:841px;top:56px;" width="16" height="16" viewBox="0 0 16 16"><path d="M3 1v6M5 1v6M7 1v6" stroke="#333" stroke-width="0.800"/><path d="M7 3l8 5-8 6z" fill="#333"/><ellipse cx="4.500" cy="10.500" rx="3.200" ry="3.800" fill="#111"/><circle cx="4.500" cy="10" r="1.300" fill="#999"/></svg>
<svg style="left:874px;top:56px;" width="16" height="16" viewBox="0 0 16 16"><rect x="2.500" y="1.500" width="4.800" height="13" rx="1" fill="#ee5070" stroke="#c8143c" stroke-width="0.800"/><rect x="9.700" y="1.500" width="4.800" height="13" rx="1" fill="#ee5070" stroke="#c8143c" stroke-width="0.800"/></svg>
<svg style="left:897px;top:56px;" width="16" height="16" viewBox="0 0 16 16"><rect x="2" y="2" width="12" height="12" fill="#f00000" stroke="#a00000" stroke-width="1"/></svg>
<svg style="left:919px;top:56px;" width="16" height="16" viewBox="0 0 16 16"><path d="M5 10l2-2h4v5l-2 2h-4z" fill="#b8b8b8" stroke="#555" stroke-width="0.7"/><path d="M5 10h4v5M9 10l2-2" fill="none" stroke="#555" stroke-width="0.7"/><path d="M3 2h4.500v5" fill="none" stroke="#333" stroke-width="0.800" stroke-dasharray="1 1"/><path d="M5.500 5.500l2 2.500 2-2.500z" fill="#222"/></svg>
<svg style="left:941px;top:56px;" width="16" height="16" viewBox="0 0 16 16"><path d="M5 10l2-2h4v5l-2 2h-4z" fill="#b8b8b8" stroke="#555" stroke-width="0.7"/><path d="M5 10h4v5M9 10l2-2" fill="none" stroke="#555" stroke-width="0.7"/><path d="M2 8q1-6 7-5.500t4 3" fill="none" stroke="#333" stroke-width="0.800" stroke-dasharray="1 1"/><path d="M10.500 5l3.500 0.500-1.500 2.500z" fill="#222"/></svg>
<svg style="left:963px;top:56px;" width="16" height="16" viewBox="0 0 16 16"><path d="M3 10l2-2h4v5l-2 2h-4z" fill="#b8b8b8" stroke="#555" stroke-width="0.7"/><path d="M3 10h4v5M7 10l2-2" fill="none" stroke="#555" stroke-width="0.7"/><path d="M6 8q0-5 6-5" fill="none" stroke="#333" stroke-width="0.800" stroke-dasharray="1 1"/><path d="M11 0.500l3.500 2.500-3.500 2.500z" fill="#222"/></svg>
<svg style="left:123px;top:62px;" width="8" height="5" viewBox="0 0 8 5"><path d="M0.500 0.500h7l-3.500 3.500z" fill="#222"/></svg>
<svg style="left:206.5px;top:62px;" width="8" height="5" viewBox="0 0 8 5"><path d="M0.500 0.500h7l-3.500 3.500z" fill="#222"/></svg>
<svg style="left:333.5px;top:62px;" width="8" height="5" viewBox="0 0 8 5"><path d="M0.500 0.500h7l-3.500 3.500z" fill="#222"/></svg>
<svg style="left:624.5px;top:62px;" width="8" height="5" viewBox="0 0 8 5"><path d="M0.500 0.500h7l-3.500 3.500z" fill="#222"/></svg>
<svg style="left:756.5px;top:62px;" width="8" height="5" viewBox="0 0 8 5"><path d="M0.500 0.500h7l-3.500 3.500z" fill="#222"/></svg>
<svg style="left:861.5px;top:62px;" width="8" height="5" viewBox="0 0 8 5"><path d="M0.500 0.500h7l-3.500 3.500z" fill="#777"/></svg>
<svg style="left:0px;top:100px;" width="560" height="40" viewBox="0 0 560 40"><path d="M49.5 9.500h19.500l1.200 1.200v2.300h-20.700z" fill="#fff" stroke="#333" stroke-width="1.200"/><rect x="52" y="10.8" width="5" height="1.4" fill="#222"/><rect x="58.5" y="10.8" width="4" height="1.4" fill="#222"/><rect x="64" y="10.8" width="3.5" height="1.4" fill="#222"/><rect x="49.500" y="13" width="11" height="15" fill="#fff" stroke="#333" stroke-width="1.200"/><rect x="51.5" y="15.5" width="5" height="1.4" fill="#222"/><rect x="51.5" y="18" width="6" height="1.4" fill="#222"/><rect x="51.5" y="20.5" width="4" height="1.4" fill="#222"/><rect x="51.5" y="25" width="5" height="1.4" fill="#222"/><rect x="50" y="23" width="10" height="1" fill="#333"/><rect x="79.500" y="10.500" width="10.500" height="15" fill="#fff" stroke="#333" stroke-width="1.200"/><rect x="81.5" y="13" width="6" height="1.4" fill="#222"/><rect x="81.5" y="15.5" width="5" height="1.4" fill="#222"/><rect x="81.5" y="18" width="6.5" height="1.4" fill="#222"/><rect x="81.5" y="20.5" width="4" height="1.4" fill="#222"/><rect x="81.5" y="23" width="5.5" height="1.4" fill="#222"/><path d="M88.500 15.500v11.500l2.600-2.400 2 4.400 1.800-0.900-2-4.300h3.500z" fill="#fff" stroke="#444" stroke-width="1"/><rect x="102.500" y="12.500" width="23" height="13" rx="1.500" fill="#e9e9e9" stroke="#3a78d0" stroke-width="1.200"/><text x="114" y="22.500" font-size="8.500" text-anchor="middle" fill="#333" font-family="DejaVu Sans, sans-serif">Ok</text><text x="131" y="25" font-size="13.500" fill="#1da1d8" font-family="Liberation Sans, sans-serif" textLength="21">Abc</text><rect x="131.5" y="26" width="8.5" height="1.2" fill="#1da1d8"/><rect x="157.500" y="12.500" width="21.500" height="13" fill="#fff" stroke="#7a9ac8" stroke-width="1"/><text x="159" y="23.500" font-size="12" fill="#222" font-family="DejaVu Sans, sans-serif" textLength="13">ab</text><path d="M173 14.500h3M174.500 14.500v9M173 23.500h3" stroke="#111" stroke-width="1" fill="none"/><rect x="187.500" y="11.500" width="15" height="17" fill="#fafafa" stroke="#7a9ac8" stroke-width="1"/><rect x="190" y="15" width="10" height="0.9" fill="#999"/><rect x="190" y="17.5" width="10" height="0.9" fill="#999"/><rect x="190" y="20" width="10" height="0.9" fill="#999"/><rect x="190" y="22.5" width="10" height="0.9" fill="#999"/><rect x="190" y="25" width="10" height="0.9" fill="#999"/><path d="M192.500 22.500l1.200-3.500 8.500-8.500 2.300 2.300-8.500 8.500z" fill="#f6c830" stroke="#b07a10" stroke-width="0.600"/><circle cx="204" cy="11.200" r="1.600" fill="#e02020"/><path d="M192.500 22.500l1-2.800 1.800 1.800z" fill="#c08a60"/><rect x="210.300" y="12.500" width="23" height="13" rx="1.500" fill="#cfe4fb" stroke="#1f64c0" stroke-width="1.300"/><text x="221.800" y="22" font-size="9" text-anchor="middle" fill="#222" font-family="DejaVu Sans, sans-serif">on</text><rect x="242.300" y="11.500" width="14.500" height="14" fill="#d6d6d6" stroke="#3a78d0" stroke-width="1"/><path d="M245 18l3 3.500 6-7" fill="none" stroke="#1010e0" stroke-width="2.600"/><circle cx="275.800" cy="18.800" r="6.800" fill="#fff" stroke="#555" stroke-width="0.900"/><circle cx="275.800" cy="18.800" r="3.200" fill="#0a0aee"/><rect x="293.300" y="9.500" width="18.500" height="18" fill="#fff" stroke="#333" stroke-width="1.200"/><path d="M307 9.500v18" stroke="#333" stroke-width="1"/><rect x="307.800" y="14.500" width="3.400" height="8" fill="#c8c4b8"/><rect x="295.5" y="11.8" width="10" height="1.3" fill="#111"/><rect x="295.5" y="14.5" width="8" height="1.3" fill="#111"/><rect x="295.5" y="17.2" width="10" height="1.3" fill="#111"/><rect x="295.5" y="19.9" width="9" height="1.3" fill="#111"/><rect x="295.5" y="22.6" width="10" height="1.3" fill="#111"/><rect x="295.5" y="25.2" width="8" height="1.3" fill="#111"/><path d="M308.300 13l1.200-1.800 1.200 1.800zM308.300 24l1.200 1.800 1.200-1.800z" fill="#111"/><rect x="320.500" y="9.500" width="18.500" height="18" fill="#fff" stroke="#333" stroke-width="1.200"/><path d="M320.500 14.500h18.500M334 9.500v5" stroke="#333" stroke-width="1"/><rect x="323" y="11.3" width="9" height="1.5" fill="#999"/><path d="M335.300 11.300h2.600l-1.300 1.800z" fill="#111"/><rect x="323.5" y="16.5" width="12" height="1.3" fill="#111"/><rect x="323.5" y="18.8" width="9" height="1.3" fill="#111"/><rect x="323.5" y="21.1" width="11" height="1.3" fill="#111"/><rect x="323.5" y="23.4" width="13" height="1.3" fill="#111"/><rect x="323.5" y="25.6" width="8" height="1.3" fill="#111"/><rect x="346.300" y="15" width="21.500" height="7" fill="#fff" stroke="#333" stroke-width="1.100"/><rect x="352.500" y="16" width="9" height="5" fill="#c8c4b8"/><path d="M352 15v7M362 15v7" stroke="#333" stroke-width="0.800"/><path d="M350.300 17l-1.800 1.500 1.800 1.500zM364 17l1.800 1.500-1.800 1.500z" fill="#111"/><rect x="375.5" y="10.500" width="17" height="17" fill="#f4f4f4" stroke="#a0a0a0" stroke-width="1"/><rect x="377.0" y="9.300" width="8" height="2.400" rx="0.800" fill="#2f6fc0"/><rect x="402.5" y="10.500" width="17" height="17" fill="#f4f4f4" stroke="#a0a0a0" stroke-width="1"/><rect x="404.0" y="9.300" width="8" height="2.400" rx="0.800" fill="#2f6fc0"/><rect x="429.5" y="10.500" width="17" height="17" fill="#f4f4f4" stroke="#a0a0a0" stroke-width="1"/><rect x="431.0" y="9.300" width="8" height="2.400" rx="0.800" fill="#2f6fc0"/><circle cx="406" cy="15" r="1.100" fill="#22e" stroke="#777" stroke-width="0.500"/><rect x="408.5" y="14.5" width="8" height="1" fill="#333"/><circle cx="406" cy="19.2" r="1.100" fill="#fff" stroke="#777" stroke-width="0.500"/><rect x="408.5" y="18.7" width="8" height="1" fill="#333"/><circle cx="406" cy="23.4" r="1.100" fill="#fff" stroke="#777" stroke-width="0.500"/><rect x="408.5" y="22.9" width="8" height="1" fill="#333"/><path d="M432 15l1.200 1.300 2.200-2.800" stroke="#111" stroke-width="0.900" fill="none"/><rect x="436.5" y="15" width="8" height="1" fill="#333"/><path d="M432 19.2l1.200 1.300 2.200-2.800" stroke="#111" stroke-width="0.900" fill="none"/><rect x="436.5" y="19.2" width="8" height="1" fill="#333"/><path d="M432 23.4l1.200 1.300 2.200-2.800" stroke="#111" stroke-width="0.900" fill="none"/><rect x="436.5" y="23.4" width="8" height="1" fill="#333"/><rect x="456.500" y="10.500" width="17" height="17" fill="#f6f6f6" stroke="#a8a8a8" stroke-width="1"/><rect x="481.500" y="9.500" width="21" height="19" fill="#fff" stroke="#2f6fd0" stroke-width="1.200"/><rect x="482" y="10" width="20" height="3" fill="#2f6fd0"/><rect x="499.500" y="10.300" width="2" height="2" fill="#e02020"/><rect x="485" y="17" width="14" height="7.500" fill="#ececec" stroke="#8ab0e8" stroke-width="0.900"/><path d="M508.500 9.500h19.500l1.200 1.200v2.300h-20.700z" fill="#fff" stroke="#333" stroke-width="1.200"/><rect x="511" y="10.8" width="5" height="1.4" fill="#222"/><rect x="517.5" y="10.8" width="4" height="1.4" fill="#222"/><rect x="523" y="10.8" width="3.5" height="1.4" fill="#222"/><rect x="508.500" y="13" width="11" height="14.500" fill="#fff" stroke="#333" stroke-width="1.200"/><rect x="510.5" y="15.5" width="5" height="1.4" fill="#222"/><rect x="510.5" y="18" width="6" height="1.4" fill="#222"/><rect x="510.5" y="20.5" width="4" height="1.4" fill="#222"/><rect x="510.5" y="25" width="5" height="1.4" fill="#222"/><rect x="514.800" y="20" width="14.500" height="9.500" rx="1.500" fill="#e9e9e9" stroke="#3a78d0" stroke-width="1.100"/><text x="522" y="27.500" font-size="7.500" text-anchor="middle" fill="#333" font-family="DejaVu Sans, sans-serif">Ok</text></svg>
<div style="left:0px;top:163px;width:337px;height:789px;background:#f0f0f0;border-radius:0 0 8px 8px;box-shadow:0 0 6px rgba(0,0,0,.35);"></div>
<div style="left:0px;top:163px;width:337px;height:27px;background:linear-gradient(180deg,#cdcdcd 0,#d9d9d9 30%,#e1e1e1 70%,#e3e3e3);"></div>
<div style="left:0px;top:189px;width:337px;height:1px;background:#b4b4b4;"></div>
<div style="left:0px;top:190px;width:337px;height:14px;background:#efeca9;"></div>
<div style="left:0px;top:204px;width:337px;height:60px;background:linear-gradient(180deg,#e7e7e7,#ececec 50%,#f0f0f0);"></div>
<svg style="left:5px;top:164.5px;" width="16" height="17" viewBox="0 0 16 17"><path d="M0.800 2.500Q1.500 8 2 11.500Q4.500 13 7.500 14.500L8 15.800L9 13Q12.500 9 14.200 2.500Z" fill="#2a70c8"/><ellipse cx="7.500" cy="2.300" rx="7" ry="1.800" fill="#1458b0"/><ellipse cx="7.500" cy="2.200" rx="4.500" ry="0.800" fill="#0c3a80"/><path d="M2 4.800q5.500 1.200 10.500-0.300M2.300 6.800q4.500 1 9-0.400M2.500 8.800q3 0.800 6 0" stroke="#8ec0f4" stroke-width="0.900" fill="none"/><path d="M6.500 11.500l3-2.500 2.500 2.500-3 2.500z" fill="#f4f4f8"/><circle cx="9.500" cy="12" r="1.600" fill="#bfe6f4"/><circle cx="11.500" cy="9" r="1.500" fill="#28b8c0"/><circle cx="12.800" cy="11" r="2.100" fill="#e89048"/><rect x="10.500" y="13.800" width="2.200" height="1.600" fill="#c8a020"/></svg>
<span style="left:26px;top:167.17px;font-size:12.5px;line-height:15px;color:#8a8a8a;letter-spacing:-0.186px;">Inspecteur d&#x27;objets</span>
<svg style="left:218px;top:167px;" width="12" height="12" viewBox="0 0 12 12"><path d="M0 6.500h10" stroke="#999" stroke-width="1"/></svg>
<svg style="left:263px;top:168px;" width="11" height="11" viewBox="0 0 11 11"><rect x="0.500" y="0.500" width="9" height="9" rx="1" stroke="#999" fill="none"/></svg>
<svg style="left:308px;top:168px;" width="11" height="11" viewBox="0 0 11 11"><path d="M0.500 0.500l10 10M10.500 0.500l-10 10" stroke="#999" fill="none"/></svg>
<svg style="left:322px;top:192px;" width="11" height="10" viewBox="0 0 11 10"><path d="M1.500 1.500l8 7M9.500 1.500l-8 7" stroke="#000080" stroke-width="2.200"/></svg>
<span style="left:1px;top:212.84px;font-size:12px;line-height:14px;color:#000;letter-spacing:-0.237px;">Composants</span>
<div style="left:14px;top:226px;width:16px;height:1px;background:#000;"></div>
<div style="left:72px;top:208.5px;width:234px;height:22.5px;background:#fff;border:1px solid #ececec;border-bottom:1.500px solid #7c7c7c;border-radius:2px;"></div>
<span style="left:76px;top:211.84px;font-size:12px;line-height:14px;color:#555;letter-spacing:0.042px;">(filtre)</span>
<div style="left:312.5px;top:209.5px;width:20px;height:20px;background:#f5f5f5;border:1px solid #e6e6e6;border-radius:3.500px;"></div>
<svg style="left:314.0px;top:213.0px;" width="17" height="14" viewBox="0 0 17 14"><path d="M0.500 0.500h12l-4.300 6v5.500h-3.400v-5.500z" fill="#ececec" stroke="#8c8c8c" stroke-width="1"/><path d="M10 6.500l5.500 5.500M15.500 6.500l-5.500 5.500" stroke="#333" stroke-width="1.800"/></svg>
<div style="left:0px;top:234px;width:334px;height:128px;background:#fff;border:1px solid #a8a8a8;"></div>
<div style="left:316px;top:235px;width:17px;height:126px;background:#f0f0f0;"></div>
<div style="left:323px;top:253px;width:2px;height:44px;background:#8a8a8a;border-radius:1px;"></div>
<div style="left:35px;top:237px;width:130px;height:17px;background:#d9d9d9;border-radius:3px;"></div>
<svg style="left:4px;top:237px;" width="10" height="11" viewBox="0 0 10 11"><path d="M0.800 5l4.200 4.300 4.200-4.300" stroke="#111" stroke-width="1.500" fill="none"/><path d="M5 0v7" stroke="#333" stroke-dasharray="1 1"/></svg>
<svg style="left:18px;top:238px;" width="16" height="15" viewBox="0 0 16 15"><rect x="0.500" y="0.500" width="15" height="13.500" fill="#fff" stroke="#2a5fd0" stroke-width="1"/><rect x="0.500" y="0.500" width="15" height="3" fill="#2a5fd0"/></svg>
<span style="left:37px;top:237.84px;font-size:12px;line-height:14px;color:#000;letter-spacing:-0.115px;">frmScaling: TfrmScaling</span>
<div style="left:24px;top:253.8px;width:1px;height:18px;border-left:1px dotted #888;"></div>
<div style="left:26px;top:262.8px;width:6px;height:1px;border-top:1px dotted #666;"></div>
<svg style="left:33px;top:255.8px;" width="16" height="15" viewBox="0 0 16 15"><rect x="0.500" y="0.500" width="15" height="13" fill="#fff" stroke="#2a5fd0" stroke-width="1"/><rect x="0.500" y="0.500" width="15" height="3" fill="#2a5fd0"/><rect x="4.500" y="6.500" width="7" height="4.500" fill="#e6e6e6" stroke="#5a86d8" stroke-width="1"/></svg>
<span style="left:52.2px;top:255.84px;font-size:12px;line-height:14px;color:#000;letter-spacing:-0.205px;">tbWidth: TTrackBar</span>
<div style="left:24px;top:271.8px;width:1px;height:18px;border-left:1px dotted #888;"></div>
<div style="left:26px;top:280.8px;width:6px;height:1px;border-top:1px dotted #666;"></div>
<svg style="left:33px;top:273.8px;" width="16" height="15" viewBox="0 0 16 15"><rect x="0.500" y="0.500" width="15" height="13" fill="#fff" stroke="#2a5fd0" stroke-width="1"/><rect x="0.500" y="0.500" width="15" height="3" fill="#2a5fd0"/><rect x="4.500" y="6.500" width="7" height="4.500" fill="#e6e6e6" stroke="#5a86d8" stroke-width="1"/></svg>
<span style="left:52.2px;top:273.84px;font-size:12px;line-height:14px;color:#000;letter-spacing:-0.370px;">Label1: TLabel</span>
<div style="left:24px;top:289.8px;width:1px;height:18px;border-left:1px dotted #888;"></div>
<div style="left:26px;top:298.8px;width:6px;height:1px;border-top:1px dotted #666;"></div>
<svg style="left:33px;top:291.8px;" width="16" height="15" viewBox="0 0 16 15"><rect x="0.500" y="0.500" width="15" height="13" fill="#fff" stroke="#2a5fd0" stroke-width="1"/><rect x="0.500" y="0.500" width="15" height="3" fill="#2a5fd0"/><rect x="4.500" y="6.500" width="7" height="4.500" fill="#e6e6e6" stroke="#5a86d8" stroke-width="1"/></svg>
<span style="left:52.2px;top:291.84px;font-size:12px;line-height:14px;color:#000;letter-spacing:-0.195px;">tbHeight: TTrackBar</span>
<div style="left:24px;top:307.8px;width:1px;height:18px;border-left:1px dotted #888;"></div>
<div style="left:26px;top:316.8px;width:6px;height:1px;border-top:1px dotted #666;"></div>
<svg style="left:33px;top:309.8px;" width="16" height="15" viewBox="0 0 16 15"><rect x="0.500" y="0.500" width="15" height="13" fill="#fff" stroke="#2a5fd0" stroke-width="1"/><rect x="0.500" y="0.500" width="15" height="3" fill="#2a5fd0"/><rect x="4.500" y="6.500" width="7" height="4.500" fill="#e6e6e6" stroke="#5a86d8" stroke-width="1"/></svg>
<span style="left:52.2px;top:309.84px;font-size:12px;line-height:14px;color:#000;letter-spacing:-0.370px;">Label2: TLabel</span>
<div style="left:24px;top:325.8px;width:1px;height:18px;border-left:1px dotted #888;"></div>
<div style="left:26px;top:334.8px;width:6px;height:1px;border-top:1px dotted #666;"></div>
<svg style="left:33px;top:327.8px;" width="16" height="15" viewBox="0 0 16 15"><rect x="0.500" y="0.500" width="15" height="13" fill="#fff" stroke="#2a5fd0" stroke-width="1"/><rect x="0.500" y="0.500" width="15" height="3" fill="#2a5fd0"/><rect x="4.500" y="6.500" width="7" height="4.500" fill="#e6e6e6" stroke="#5a86d8" stroke-width="1"/></svg>
<span style="left:52.2px;top:327.84px;font-size:12px;line-height:14px;color:#000;letter-spacing:-0.370px;">Label3: TLabel</span>
<div style="left:24px;top:343.8px;width:1px;height:9px;border-left:1px dotted #888;"></div>
<div style="left:26px;top:352.8px;width:6px;height:1px;border-top:1px dotted #666;"></div>
<svg style="left:33px;top:345.8px;" width="16" height="15" viewBox="0 0 16 15"><rect x="0.500" y="0.500" width="15" height="13" fill="#fff" stroke="#2a5fd0" stroke-width="1"/><rect x="0.500" y="0.500" width="15" height="3" fill="#2a5fd0"/><rect x="4.500" y="6.500" width="7" height="4.500" fill="#e6e6e6" stroke="#5a86d8" stroke-width="1"/></svg>
<span style="left:52.2px;top:345.84px;font-size:12px;line-height:14px;color:#000;letter-spacing:-0.307px;">cbLocked: TCheckBox</span>
<div style="left:24px;top:254px;width:1px;height:6px;border-left:1px dotted #888;"></div>
<div style="left:152px;top:367px;width:30px;height:2px;background:repeating-linear-gradient(90deg,#aaa 0 2px,transparent 2px 4px);"></div>
<span style="left:2px;top:377.34px;font-size:12px;line-height:14px;color:#000;letter-spacing:-0.169px;">Propriétés</span>
<div style="left:2px;top:390px;width:7px;height:1px;background:#000;"></div>
<div style="left:61px;top:373.5px;width:245px;height:22.5px;background:#fff;border:1px solid #ececec;border-bottom:1.500px solid #7c7c7c;border-radius:2px;"></div>
<span style="left:64px;top:376.84px;font-size:12px;line-height:14px;color:#555;letter-spacing:0.042px;">(filtre)</span>
<div style="left:312.5px;top:374.5px;width:20px;height:20px;background:#f5f5f5;border:1px solid #e6e6e6;border-radius:3.500px;"></div>
<svg style="left:314.0px;top:378.0px;" width="17" height="14" viewBox="0 0 17 14"><path d="M0.500 0.500h12l-4.300 6v5.500h-3.400v-5.500z" fill="#ececec" stroke="#8c8c8c" stroke-width="1"/><path d="M10 6.500l5.500 5.500M15.500 6.500l-5.500 5.500" stroke="#333" stroke-width="1.800"/></svg>
<div style="left:0px;top:422px;width:335px;height:448px;background:#f9f9f9;border:1px solid #dcdcdc;"></div>
<div style="left:66px;top:402px;width:194px;height:20px;background:#f1f1f1;border-top:1px solid #e8e8e8;"></div>
<div style="left:138px;top:403px;width:1px;height:19px;background:#e4e4e4;"></div>
<div style="left:139px;top:403px;width:1px;height:19px;background:#f9f9f9;"></div>
<div style="left:187px;top:403px;width:1px;height:19px;background:#e4e4e4;"></div>
<div style="left:188px;top:403px;width:1px;height:19px;background:#f9f9f9;"></div>
<div style="left:259px;top:403px;width:1px;height:19px;background:#e4e4e4;"></div>
<div style="left:260px;top:403px;width:1px;height:19px;background:#f9f9f9;"></div>
<div style="left:0px;top:399px;width:66px;height:24px;background:#f9f9f9;border:1px solid #dcdcdc;border-bottom:none;border-radius:2px 2px 0 0;"></div>
<span style="left:5px;top:401.84px;font-size:12px;line-height:14px;color:#000;letter-spacing:-0.169px;">Propriétés</span>
<span style="left:70.2px;top:403.84px;font-size:12px;line-height:14px;color:#000;letter-spacing:-0.310px;">Événements</span>
<span style="left:146px;top:403.84px;font-size:12px;line-height:14px;color:#000;letter-spacing:-0.377px;">Favoris</span>
<span style="left:195px;top:403.84px;font-size:12px;line-height:14px;color:#000;letter-spacing:-0.140px;">Restrictions</span>
<div style="left:2px;top:423px;width:331px;height:446px;background:#f0f0f0;border:1px solid #9a9a9a;overflow:hidden;"></div>
<div style="left:315px;top:424px;width:17px;height:444px;background:#f0f0f0;"></div>
<div style="left:322px;top:441px;width:2px;height:142px;background:#8a8a8a;border-radius:1px;"></div>
<div style="left:24px;top:424px;width:1px;height:445px;background:#8c8c8c;"></div>
<div style="left:111px;top:424px;width:1px;height:445px;background:#8c8c8c;"></div>
<div style="left:25px;top:445px;width:290px;height:1px;border-top:1px dotted #a0a0a0;"></div>
<div style="left:27px;top:425.5px;width:84px;height:18px;overflow:hidden;">
<span style="left:0px;top:2.34px;font-size:12px;line-height:14px;color:#800000;letter-spacing:0.191px;">Action</span>
</div>
<div style="left:25px;top:467px;width:290px;height:1px;border-top:1px dotted #a0a0a0;"></div>
<div style="left:27px;top:447.5px;width:84px;height:18px;overflow:hidden;">
<span style="left:0px;top:2.34px;font-size:12px;line-height:14px;color:#800000;letter-spacing:0.126px;">ActiveControl</span>
</div>
<div style="left:25px;top:489px;width:290px;height:1px;border-top:1px dotted #a0a0a0;"></div>
<div style="left:27px;top:469.5px;width:84px;height:18px;overflow:hidden;">
<span style="left:0px;top:2.34px;font-size:12px;line-height:14px;color:#000;letter-spacing:0.183px;">Align</span>
</div>
<div style="left:116px;top:469.5px;width:198px;height:18px;overflow:hidden;">
<span style="left:0.3px;top:2.34px;font-size:12px;line-height:14px;color:#000;letter-spacing:-0.005px;">alNone</span>
</div>
<div style="left:25px;top:511px;width:290px;height:1px;border-top:1px dotted #a0a0a0;"></div>
<div style="left:27px;top:491.5px;width:84px;height:18px;overflow:hidden;">
<span style="left:0px;top:2.34px;font-size:12px;line-height:14px;color:#000;letter-spacing:-0.073px;">AllowDropFiles</span>
</div>
<div style="left:116px;top:494px;width:13px;height:13px;background:#fbfbfb;border:1px solid #555;border-radius:3px;"></div>
<span style="left:134.7px;top:493.84px;font-size:12px;line-height:14px;color:#000;letter-spacing:-0.648px;">(False)</span>
<div style="left:25px;top:533px;width:290px;height:1px;border-top:1px dotted #a0a0a0;"></div>
<div style="left:27px;top:513.5px;width:84px;height:18px;overflow:hidden;">
<span style="left:0px;top:2.34px;font-size:12px;line-height:14px;color:#000;letter-spacing:-0.038px;">AlphaBlend</span>
</div>
<div style="left:116px;top:516px;width:13px;height:13px;background:#fbfbfb;border:1px solid #555;border-radius:3px;"></div>
<span style="left:134.7px;top:515.84px;font-size:12px;line-height:14px;color:#000;letter-spacing:-0.648px;">(False)</span>
<div style="left:25px;top:555px;width:290px;height:1px;border-top:1px dotted #a0a0a0;"></div>
<div style="left:27px;top:535.5px;width:84px;height:18px;overflow:hidden;">
<span style="left:0px;top:2.34px;font-size:12px;line-height:14px;color:#000;letter-spacing:0.121px;">AlphaBlendValue</span>
</div>
<div style="left:116px;top:535.5px;width:198px;height:18px;overflow:hidden;">
<span style="left:0.3px;top:2.34px;font-size:12px;line-height:14px;color:#000;letter-spacing:-0.774px;">255</span>
</div>
<div style="left:25px;top:577px;width:290px;height:1px;border-top:1px dotted #a0a0a0;"></div>
<div style="left:27px;top:557.5px;width:84px;height:18px;overflow:hidden;">
<span style="left:0px;top:2.34px;font-size:12px;line-height:14px;color:#000;letter-spacing:-0.003px;">Anchors</span>
</div>
<svg style="left:9px;top:561.5px;" width="7" height="10" viewBox="0 0 7 10"><path d="M1 0.500l4.500 4.500-4.500 4.500" stroke="#777" stroke-width="1.200" fill="none"/></svg>
<div style="left:116px;top:557.5px;width:198px;height:18px;overflow:hidden;">
<span style="left:0.3px;top:2.34px;font-size:12px;line-height:14px;color:#000;letter-spacing:-0.072px;">[akTop,akLeft]</span>
</div>
<div style="left:25px;top:599px;width:290px;height:1px;border-top:1px dotted #a0a0a0;"></div>
<div style="left:27px;top:579.5px;width:84px;height:18px;overflow:hidden;">
<span style="left:0px;top:2.34px;font-size:12px;line-height:14px;color:#000;letter-spacing:0.031px;">AutoScroll</span>
</div>
<div style="left:116px;top:582px;width:13px;height:13px;background:#fbfbfb;border:1px solid #555;border-radius:3px;"></div>
<span style="left:134.7px;top:581.84px;font-size:12px;line-height:14px;color:#000;letter-spacing:-0.648px;">(False)</span>
<div style="left:25px;top:621px;width:290px;height:1px;border-top:1px dotted #a0a0a0;"></div>
<div style="left:27px;top:601.5px;width:84px;height:18px;overflow:hidden;">
<span style="left:0px;top:2.34px;font-size:12px;line-height:14px;color:#000;letter-spacing:-0.254px;">AutoSize</span>
</div>
<div style="left:116px;top:604px;width:13px;height:13px;background:#fbfbfb;border:1px solid #555;border-radius:3px;"></div>
<span style="left:134.7px;top:603.84px;font-size:12px;line-height:14px;color:#000;letter-spacing:-0.648px;">(False)</span>
<div style="left:25px;top:643px;width:290px;height:1px;border-top:1px dotted #a0a0a0;"></div>
<div style="left:27px;top:623.5px;width:84px;height:18px;overflow:hidden;">
<span style="left:0px;top:2.34px;font-size:12px;line-height:14px;color:#000;letter-spacing:0.047px;">BiDiMode</span>
</div>
<div style="left:116px;top:623.5px;width:198px;height:18px;overflow:hidden;">
<span style="left:0.3px;top:2.34px;font-size:12px;line-height:14px;color:#000;letter-spacing:-0.027px;">bdLeftToRight</span>
</div>
<div style="left:25px;top:665px;width:290px;height:1px;border-top:1px dotted #a0a0a0;"></div>
<div style="left:27px;top:645.5px;width:84px;height:18px;overflow:hidden;">
<span style="left:0px;top:2.34px;font-size:12px;line-height:14px;color:#000;letter-spacing:-0.155px;">BorderIcons</span>
</div>
<svg style="left:9px;top:649.5px;" width="7" height="10" viewBox="0 0 7 10"><path d="M1 0.500l4.500 4.500-4.500 4.500" stroke="#777" stroke-width="1.200" fill="none"/></svg>
<div style="left:116px;top:645.5px;width:198px;height:18px;overflow:hidden;">
<span style="left:0.3px;top:2.34px;font-size:12px;line-height:14px;color:#000;letter-spacing:0.160px;">[biSystemMenu,biMinimize,biMaximized]</span>
</div>
<div style="left:25px;top:687px;width:290px;height:1px;border-top:1px dotted #a0a0a0;"></div>
<div style="left:27px;top:667.5px;width:84px;height:18px;overflow:hidden;">
<span style="left:0px;top:2.34px;font-size:12px;line-height:14px;color:#000;letter-spacing:0.300px;">BorderStyle</span>
</div>
<div style="left:116px;top:667.5px;width:198px;height:18px;overflow:hidden;">
<span style="left:0.3px;top:2.34px;font-size:12px;line-height:14px;color:#800000;letter-spacing:-0.333px;font-weight:bold;">bsSizeToolWin</span>
</div>
<div style="left:25px;top:709px;width:290px;height:1px;border-top:1px dotted #a0a0a0;"></div>
<div style="left:27px;top:689.5px;width:84px;height:18px;overflow:hidden;">
<span style="left:0px;top:2.34px;font-size:12px;line-height:14px;color:#000;letter-spacing:0.028px;">BorderWidth</span>
</div>
<div style="left:116px;top:689.5px;width:198px;height:18px;overflow:hidden;">
<span style="left:0.3px;top:2.34px;font-size:12px;line-height:14px;color:#000;">0</span>
</div>
<div style="left:25px;top:731px;width:290px;height:1px;border-top:1px dotted #a0a0a0;"></div>
<div style="left:27px;top:711.5px;width:84px;height:18px;overflow:hidden;">
<span style="left:0px;top:2.34px;font-size:12px;line-height:14px;color:#000;letter-spacing:0.091px;">Caption</span>
</div>
<div style="left:116px;top:711.5px;width:198px;height:18px;overflow:hidden;">
<span style="left:0.3px;top:2.34px;font-size:12px;line-height:14px;color:#800000;letter-spacing:-0.394px;font-weight:bold;">Play with scaling</span>
</div>
<div style="left:25px;top:753px;width:290px;height:1px;border-top:1px dotted #a0a0a0;"></div>
<div style="left:27px;top:733.5px;width:84px;height:18px;overflow:hidden;">
<span style="left:0px;top:2.34px;font-size:12px;line-height:14px;color:#000;letter-spacing:-0.094px;">ChildSizing</span>
</div>
<svg style="left:9px;top:737.5px;" width="7" height="10" viewBox="0 0 7 10"><path d="M1 0.500l4.500 4.500-4.500 4.500" stroke="#777" stroke-width="1.200" fill="none"/></svg>
<div style="left:116px;top:733.5px;width:198px;height:18px;overflow:hidden;">
<span style="left:0.3px;top:2.34px;font-size:12px;line-height:14px;color:#000;letter-spacing:-0.097px;">(TControlChildSizing)</span>
</div>
<div style="left:25px;top:775px;width:290px;height:1px;border-top:1px dotted #a0a0a0;"></div>
<div style="left:27px;top:755.5px;width:84px;height:18px;overflow:hidden;">
<span style="left:0px;top:2.34px;font-size:12px;line-height:14px;color:#000;letter-spacing:0.065px;">Color</span>
</div>
<div style="left:114px;top:756px;width:18px;height:18px;background:#a6caf0;border:1px solid #000;"></div>
<span style="left:135px;top:757.84px;font-size:12px;line-height:14px;color:#800000;letter-spacing:-0.374px;font-weight:bold;">clSkyBlue</span>
<div style="left:25px;top:797px;width:290px;height:1px;border-top:1px dotted #a0a0a0;"></div>
<div style="left:27px;top:777.5px;width:84px;height:18px;overflow:hidden;">
<span style="left:0px;top:2.34px;font-size:12px;line-height:14px;color:#000;letter-spacing:-0.063px;">Constraints</span>
</div>
<svg style="left:9px;top:781.5px;" width="7" height="10" viewBox="0 0 7 10"><path d="M1 0.500l4.500 4.500-4.500 4.500" stroke="#777" stroke-width="1.200" fill="none"/></svg>
<div style="left:116px;top:777.5px;width:198px;height:18px;overflow:hidden;">
<span style="left:0.3px;top:2.34px;font-size:12px;line-height:14px;color:#800000;letter-spacing:-0.334px;font-weight:bold;">(TSizeConstraints)</span>
</div>
<div style="left:25px;top:819px;width:290px;height:1px;border-top:1px dotted #a0a0a0;"></div>
<div style="left:27px;top:799.5px;width:84px;height:18px;overflow:hidden;">
<span style="left:0px;top:2.34px;font-size:12px;line-height:14px;color:#000;letter-spacing:-0.168px;">Cursor</span>
</div>
<div style="left:116px;top:799.5px;width:198px;height:18px;overflow:hidden;">
<span style="left:0.3px;top:2.34px;font-size:12px;line-height:14px;color:#000;letter-spacing:-0.002px;">crDefault</span>
</div>
<div style="left:25px;top:841px;width:290px;height:1px;border-top:1px dotted #a0a0a0;"></div>
<div style="left:27px;top:821.5px;width:84px;height:18px;overflow:hidden;">
<span style="left:0px;top:2.34px;font-size:12px;line-height:14px;color:#000;letter-spacing:0.212px;">DefaultMonitor</span>
</div>
<div style="left:116px;top:821.5px;width:198px;height:18px;overflow:hidden;">
<span style="left:0.3px;top:2.34px;font-size:12px;line-height:14px;color:#000;letter-spacing:0.138px;">dmActiveForm</span>
</div>
<div style="left:25px;top:863px;width:290px;height:1px;border-top:1px dotted #a0a0a0;"></div>
<div style="left:27px;top:843.5px;width:84px;height:18px;overflow:hidden;">
<span style="left:0px;top:2.34px;font-size:12px;line-height:14px;color:#000;letter-spacing:-0.332px;">DesignTimePPI</span>
</div>
<div style="left:116px;top:843.5px;width:198px;height:18px;overflow:hidden;">
<span style="left:0.3px;top:2.34px;font-size:12px;line-height:14px;color:#000;letter-spacing:0.576px;">96</span>
</div>
<div style="left:25px;top:868px;width:290px;height:1px;border-top:1px dotted #a0a0a0;"></div>
<div style="left:152px;top:876px;width:30px;height:2px;background:repeating-linear-gradient(90deg,#aaa 0 2px,transparent 2px 4px);"></div>
<div style="left:0px;top:928px;width:335px;height:1px;background:#dcdcdc;"></div>
<div style="left:357px;top:163px;width:1236px;height:653px;background:#f0f0f0;border-radius:0 0 8px 8px;box-shadow:0 0 6px rgba(0,0,0,.35);"></div>
<div style="left:357px;top:163px;width:1236px;height:27px;background:linear-gradient(180deg,#cdcdcd 0,#d9d9d9 30%,#e1e1e1 70%,#e3e3e3);"></div>
<div style="left:357px;top:189px;width:1236px;height:1px;background:#b4b4b4;"></div>
<div style="left:357px;top:190px;width:15px;height:626px;background:#ffffc0;border-radius:0 0 0 8px;"></div>
<div style="left:373px;top:190px;width:1220px;height:46px;background:linear-gradient(180deg,#e4e4e4,#eeeeee 60%,#f0f0f0);"></div>
<svg style="left:365.5px;top:164.5px;" width="17" height="17" viewBox="0 0 17 17"><path d="M0.800 2.500Q1.500 8 2 11.500Q4.500 13 7.500 14.500L8 15.800L9 13Q12.500 9 14.200 2.500Z" fill="#2a70c8"/><ellipse cx="7.500" cy="2.300" rx="7" ry="1.800" fill="#1458b0"/><ellipse cx="7.500" cy="2.200" rx="4.500" ry="0.800" fill="#0c3a80"/><path d="M2 4.800q5.500 1.200 10.500-0.300M2.300 6.800q4.500 1 9-0.400M2.500 8.800q3 0.800 6 0" stroke="#8ec0f4" stroke-width="0.900" fill="none"/><path d="M5.500 11.500l3-2.500v5z" fill="#f4f4f8"/><rect x="7.800" y="8.800" width="5.600" height="6.200" fill="#48b0a8" stroke="#222" stroke-width="0.900"/><path d="M8 15h5.500v-6" stroke="#111" stroke-width="1.300" fill="none"/><path d="M9 13.500l5-6" stroke="#e8a020" stroke-width="1.700"/><circle cx="14.500" cy="7" r="1" fill="#e86060"/><circle cx="8.800" cy="11.800" r="0.900" fill="#e02020"/></svg>
<span style="left:386.4px;top:167.17px;font-size:12.5px;line-height:15px;color:#8a8a8a;letter-spacing:-0.369px;">Éditeur de source</span>
<svg style="left:1475px;top:167px;" width="12" height="12" viewBox="0 0 12 12"><path d="M0 6.500h10" stroke="#999" stroke-width="1"/></svg>
<svg style="left:1520px;top:168px;" width="11" height="11" viewBox="0 0 11 11"><rect x="0.500" y="0.500" width="9" height="9" rx="1" stroke="#999" fill="none"/></svg>
<svg style="left:1565px;top:168px;" width="11" height="11" viewBox="0 0 11 11"><path d="M0.500 0.500l10 10M10.500 0.500l-10 10" stroke="#999" fill="none"/></svg>
<svg style="left:359.5px;top:192px;" width="11" height="10" viewBox="0 0 11 10"><path d="M1.500 1.500l8 7M9.500 1.500l-8 7" stroke="#000080" stroke-width="2.200"/></svg>
<svg style="left:377px;top:193px;" width="18" height="17" viewBox="0 0 18 17"><rect x="5.500" y="1.500" width="10" height="14" fill="#fff" stroke="#333" stroke-width="1.100"/><path d="M8 5h5M8 11.500h5" stroke="#333"/><path d="M8 8.300h4" stroke="#d02020"/><path d="M0.500 6l3 2.500-3 2.500z" fill="#d02020"/></svg>
<svg style="left:398px;top:200px;" width="8" height="5" viewBox="0 0 8 5"><path d="M0.500 0.500h7l-3.500 3.500z" fill="#222"/></svg>
<svg style="left:413px;top:195px;" width="14" height="12" viewBox="0 0 14 12"><path d="M0.500 6l6-5.500v3.500h7v4h-7v3.500z" fill="#b01818" stroke="#7a0c0c" stroke-width="0.600"/></svg>
<svg style="left:436px;top:195px;" width="14" height="12" viewBox="0 0 14 12"><path d="M13.500 6l-6-5.500v3.500h-7v4h7v3.500z" fill="#2a9a2a" stroke="#146014" stroke-width="0.600"/></svg>
<div style="left:457px;top:193px;width:1px;height:18px;background:#888;"></div>
<div style="left:378px;top:236px;width:1212px;height:531px;background:#f9f9f9;border:1px solid #dedede;"></div>
<div style="left:378px;top:215px;width:565px;height:21px;background:#f1f1f1;border-top:1px solid #e6e6e6;"></div>
<div style="left:378px;top:216px;width:1px;height:20px;background:#e2e2e2;"></div>
<div style="left:379px;top:216px;width:1px;height:20px;background:#f9f9f9;"></div>
<div style="left:600px;top:216px;width:1px;height:20px;background:#e2e2e2;"></div>
<div style="left:601px;top:216px;width:1px;height:20px;background:#f9f9f9;"></div>
<div style="left:662px;top:216px;width:1px;height:20px;background:#e2e2e2;"></div>
<div style="left:663px;top:216px;width:1px;height:20px;background:#f9f9f9;"></div>
<div style="left:792px;top:216px;width:1px;height:20px;background:#e2e2e2;"></div>
<div style="left:793px;top:216px;width:1px;height:20px;background:#f9f9f9;"></div>
<div style="left:870px;top:216px;width:1px;height:20px;background:#e2e2e2;"></div>
<div style="left:871px;top:216px;width:1px;height:20px;background:#f9f9f9;"></div>
<div style="left:941px;top:216px;width:1px;height:20px;background:#e2e2e2;"></div>
<div style="left:942px;top:216px;width:1px;height:20px;background:#f9f9f9;"></div>
<div style="left:445px;top:213px;width:80px;height:24px;background:#f9f9f9;border:1px solid #dcdcdc;border-bottom:none;border-radius:2px 2px 0 0;"></div>
<span style="left:381.5px;top:219.14px;font-size:12px;line-height:14px;color:#000;letter-spacing:-0.160px;">gmazesmw</span>
<span style="left:453.5px;top:217.34px;font-size:12px;line-height:14px;color:#000;letter-spacing:-0.033px;">ufrmScaling</span>
<span style="left:529px;top:219.14px;font-size:12px;line-height:14px;color:#000;letter-spacing:-0.517px;">LazesGlobals</span>
<span style="left:608.2px;top:219.14px;font-size:12px;line-height:14px;color:#000;letter-spacing:-0.024px;">mazeunit</span>
<span style="left:669px;top:219.14px;font-size:12px;line-height:14px;color:#000;letter-spacing:-0.169px;">MazeBuilderDepthFirst</span>
<span style="left:800px;top:219.14px;font-size:12px;line-height:14px;color:#000;letter-spacing:-0.233px;">MazePainter</span>
<span style="left:877px;top:219.14px;font-size:12px;line-height:14px;color:#000;letter-spacing:-0.170px;">gmazes.ppr</span>
<div style="left:380px;top:240px;width:1190px;height:509px;background:#fff;"></div>
<div style="left:1570px;top:240px;width:18px;height:509px;background:#f0f0f0;"></div>
<div style="left:1577px;top:258px;width:2px;height:241px;background:#7a7a7a;border-radius:1px;"></div>
<div style="left:380px;top:749px;width:1208px;height:17px;background:#f0f0f0;"></div>
<div style="left:398px;top:756px;width:747px;height:2px;background:#7a7a7a;border-radius:1px;"></div>
<div style="left:386px;top:246px;width:465px;height:114px;background:#a6caf0;border:1px solid #1a6fd0;"></div>
<div style="left:387px;top:267px;width:463px;height:92px;background-image:radial-gradient(circle at 0.5px 0.5px,#000 0.700px,transparent 0.900px);background-size:8px 8px;background-position:0px 0px;"></div>
<div style="left:386px;top:246px;width:465px;height:21px;background:#0078d7;"></div>
<svg style="left:389px;top:250px;" width="17" height="15" viewBox="0 0 17 15"><rect x="0.500" y="0.500" width="15" height="13" fill="#f4f4f4" stroke="#cfd8e8" stroke-width="1"/><rect x="3" y="4" width="10" height="7" fill="none" stroke="#222" stroke-width="1" stroke-dasharray="2 1"/><path d="M1 2.500h2M13 2.500h2" stroke="#e02020" stroke-width="1.500"/></svg>
<span style="left:411.4px;top:249.84px;font-size:12px;line-height:14px;color:#fff;letter-spacing:-0.071px;">Play with scaling</span>
<div style="left:834px;top:251px;width:12.5px;height:12px;background:#c23c1c;"></div>
<svg style="left:835.8px;top:253px;" width="9" height="8" viewBox="0 0 9 8"><path d="M1 0.500l7 7M8 0.500l-7 7" stroke="#fff" stroke-width="1.200"/></svg>
<div style="left:386px;top:369.3px;width:224px;height:2px;background:#18b0f0;"></div>
<div style="left:625px;top:369.3px;width:481px;height:2px;background:#18b0f0;"></div>
<div style="left:613px;top:366px;width:9px;height:9px;background:#fff;border:1px solid #18a0e0;"></div>
<div style="left:860.5px;top:247px;width:2px;height:48px;background:#18b0f0;"></div>
<div style="left:860.5px;top:310px;width:2px;height:10px;background:#18b0f0;"></div>
<div style="left:857px;top:299px;width:9px;height:9px;background:#fff;border:1px solid #18a0e0;"></div>
<div style="left:392px;top:272px;width:75px;height:19px;background:#a6caf0;"></div>
<div style="left:530px;top:272px;width:68px;height:21px;background:#a6caf0;"></div>
<div style="left:452px;top:293px;width:146px;height:22px;background:#a6caf0;"></div>
<div style="left:452px;top:317px;width:146px;height:22px;background:#a6caf0;"></div>
<div style="left:407px;top:297px;width:45px;height:18px;background:#a6caf0;"></div>
<div style="left:403px;top:321px;width:49px;height:18px;background:#a6caf0;"></div>
<div style="left:632px;top:272px;width:105px;height:19px;background:#a6caf0;"></div>
<div style="left:770px;top:272px;width:68px;height:21px;background:#a6caf0;"></div>
<div style="left:692px;top:293px;width:146px;height:22px;background:#a6caf0;"></div>
<div style="left:692px;top:317px;width:146px;height:22px;background:#a6caf0;"></div>
<div style="left:647px;top:297px;width:45px;height:18px;background:#a6caf0;"></div>
<div style="left:643px;top:321px;width:49px;height:18px;background:#a6caf0;"></div>
<span style="left:395.5px;top:274.90px;font-size:13px;line-height:16px;color:#0000f0;letter-spacing:-0.133px;font-family:'DejaVu Sans',sans-serif;font-weight:bold;">Maze size</span>
<span style="left:532.3px;top:276.30px;font-size:13px;line-height:16px;color:#000;letter-spacing:-0.890px;font-family:'DejaVu Sans',sans-serif;font-weight:bold;">Locked</span>
<span style="left:635.3px;top:275.80px;font-size:13px;line-height:16px;color:#0000f0;letter-spacing:-0.194px;font-family:'DejaVu Sans',sans-serif;font-weight:bold;">Drawing scale</span>
<span style="left:772px;top:277.00px;font-size:13px;line-height:16px;color:#000;letter-spacing:-0.890px;font-family:'DejaVu Sans',sans-serif;font-weight:bold;">Locked</span>
<div style="left:583px;top:276.3px;width:13px;height:13px;background:#0f6cbd;border-radius:3px;"></div>
<svg style="left:585.5px;top:279.8px;" width="8" height="7" viewBox="0 0 8 7"><path d="M0.800 3.200l2.200 2.300 4-4.500" stroke="#fff" stroke-width="1.100" fill="none"/></svg>
<div style="left:823px;top:277px;width:13px;height:13px;background:#0f6cbd;border-radius:3px;"></div>
<svg style="left:825.5px;top:280.5px;" width="8" height="7" viewBox="0 0 8 7"><path d="M0.800 3.200l2.200 2.300 4-4.500" stroke="#fff" stroke-width="1.100" fill="none"/></svg>
<span style="left:407.5px;top:298.80px;font-size:13px;line-height:16px;color:#0000f0;letter-spacing:-0.254px;font-family:'DejaVu Sans',sans-serif;">Width</span>
<span style="left:403.3px;top:322.80px;font-size:13px;line-height:16px;color:#0000f0;letter-spacing:-0.379px;font-family:'DejaVu Sans',sans-serif;">Height</span>
<span style="left:647.6px;top:298.80px;font-size:13px;line-height:16px;color:#0000f0;letter-spacing:-0.314px;font-family:'DejaVu Sans',sans-serif;">Width</span>
<span style="left:643px;top:322.80px;font-size:13px;line-height:16px;color:#0000f0;letter-spacing:-0.362px;font-family:'DejaVu Sans',sans-serif;">Height</span>
<div style="left:458px;top:301px;width:135px;height:4px;background:#e4e7ea;border-radius:2px;border-top:1px solid #d0d3d8;"></div>
<svg style="left:479px;top:295px;" width="10" height="18" viewBox="0 0 10 18"><path d="M0 0h10v12l-5 5-5-5z" fill="#0078d7"/></svg>
<div style="left:458px;top:325px;width:135px;height:4px;background:#e4e7ea;border-radius:2px;border-top:1px solid #d0d3d8;"></div>
<svg style="left:479px;top:319px;" width="10" height="18" viewBox="0 0 10 18"><path d="M0 0h10v12l-5 5-5-5z" fill="#0078d7"/></svg>
<div style="left:698px;top:301px;width:135px;height:4px;background:#e4e7ea;border-radius:2px;border-top:1px solid #d0d3d8;"></div>
<svg style="left:728.2px;top:295px;" width="10" height="18" viewBox="0 0 10 18"><path d="M0 0h10v12l-5 5-5-5z" fill="#0078d7"/></svg>
<div style="left:698px;top:325px;width:135px;height:4px;background:#e4e7ea;border-radius:2px;border-top:1px solid #d0d3d8;"></div>
<svg style="left:728.2px;top:319px;" width="10" height="18" viewBox="0 0 10 18"><path d="M0 0h10v12l-5 5-5-5z" fill="#0078d7"/></svg>
<svg style="left:1491.2px;top:599px;" width="16" height="16" viewBox="0 0 16 16"><path d="M8 1.500l6 6.500h-3.500v6h-5v-6h-3.500z" fill="#1a80ff" transform="rotate(0 8 8)"/></svg>
<svg style="left:1465.8px;top:620.6px;" width="16" height="16" viewBox="0 0 16 16"><path d="M8 1.500l6 6.500h-3.500v6h-5v-6h-3.500z" fill="#1a80ff" transform="rotate(270 8 8)"/></svg>
<svg style="left:1516px;top:620.6px;" width="16" height="16" viewBox="0 0 16 16"><path d="M8 1.500l6 6.500h-3.500v6h-5v-6h-3.500z" fill="#1a80ff" transform="rotate(90 8 8)"/></svg>
<svg style="left:1491.2px;top:643px;" width="16" height="16" viewBox="0 0 16 16"><path d="M8 1.500l6 6.500h-3.500v6h-5v-6h-3.500z" fill="#1a80ff" transform="rotate(180 8 8)"/></svg>
<svg style="left:1491.2px;top:620.2px;" width="17" height="17" viewBox="0 0 17 17"><circle cx="8.500" cy="8.500" r="6.200" fill="#fff" stroke="#0a6ac8" stroke-width="2"/><text x="8.600" y="11.800" font-size="9" font-weight="bold" text-anchor="middle" fill="#0a5ab8" font-family="Liberation Sans, sans-serif">R</text></svg>
<svg style="left:1544px;top:597px;" width="18" height="14" viewBox="0 0 18 14"><path d="M1 7q8-9 16 0q-8 8-16 0z" fill="#f6e0d0" stroke="#b87858" stroke-width="1"/><circle cx="9" cy="7" r="3.600" fill="#3a8ad8"/><circle cx="9" cy="7" r="1.500" fill="#113"/><path d="M1 5q8-7.500 16 0" stroke="#7a4a30" stroke-width="1.300" fill="none"/></svg>
<svg style="left:1545px;top:620px;" width="17" height="17" viewBox="0 0 17 17"><path d="M2 9a6.500 6.500 0 0 1 11-4.500l2.500-0.500-1 5.500-5-2 1.800-1a4 4 0 0 0-6 2.500z" fill="#1a80ff"/><path d="M15 8a6.500 6.500 0 0 1-11 4.500l-2.500 0.500 1-5.500 5 2-1.800 1a4 4 0 0 0 6-2.500z" fill="#1a80ff"/></svg>
<svg style="left:1544px;top:646px;" width="18" height="18" viewBox="0 0 18 18"><path d="M2 2l7.500 7.500" stroke="#333" stroke-width="1.500" stroke-linecap="round"/><path d="M10 10l5 5" stroke="#f2c020" stroke-width="3.200" stroke-linecap="round"/><path d="M10 10l5 5" stroke="#b8860b" stroke-width="0.600" transform="translate(1.100 -1.100)"/><path d="M13 5l-10 10" stroke="#8a8e94" stroke-width="2.400" stroke-linecap="round"/><path d="M11.500 2.500a3 3 0 1 0 4 4l-2.200-0.300-1.500-1.500z" fill="#a8acb2" stroke="#666" stroke-width="0.500"/><circle cx="3.300" cy="14.700" r="0.800" fill="#fff"/></svg>
<div style="left:1431px;top:669px;width:134px;height:75px;background:#3b6ea5;border:1px solid #fff;box-shadow:-1px -1px 0 #9a9a9a,1px 1px 0 #e0e0e0;"></div>
<div style="left:1437px;top:674.5px;width:32px;height:6px;background:#e8ecf2;border:1px solid #fff;"></div>
<div style="left:373px;top:767px;width:1220px;height:27px;background:#f6f6f6;"></div>
<div style="left:378px;top:766px;width:1212px;height:1px;background:#dedede;"></div>
<div style="left:379px;top:767px;width:47px;height:20px;background:#f3f3f3;border:1px solid #e4e4e4;border-top:none;"></div>
<div style="left:425px;top:766px;width:62px;height:22px;background:#f9f9f9;border:1px solid #dedede;border-top:none;"></div>
<span style="left:385px;top:769.84px;font-size:12px;line-height:14px;color:#000;letter-spacing:-0.370px;">Source</span>
<span style="left:433px;top:772.14px;font-size:12px;line-height:14px;color:#000;letter-spacing:-0.228px;">Designer</span>
<div style="left:372px;top:793px;width:1221px;height:23px;background:#f3f3f3;border-top:1px solid #dadada;border-radius:0 0 8px 0;"></div>
<div style="left:472px;top:795px;width:1px;height:19px;background:#d8d8d8;"></div>
<div style="left:622px;top:795px;width:1px;height:19px;background:#d8d8d8;"></div>
<div style="left:672px;top:795px;width:1px;height:19px;background:#d8d8d8;"></div>
<span style="left:390px;top:798.84px;font-size:12px;line-height:14px;color:#000;letter-spacing:-0.528px;">80:  34</span>
<span style="left:627px;top:798.84px;font-size:12px;line-height:14px;color:#000;letter-spacing:-0.668px;">INS</span>
<span style="left:677.5px;top:798.84px;font-size:12px;line-height:14px;color:#000;letter-spacing:-0.043px;">C:\codetyphon\CodeOcean\20_Games\samples\GMazes\ufrmscaling.pas</span>
<div style="left:356px;top:828px;width:1236px;height:126.5px;background:#fff;border-radius:8px 8px 7px 7px;box-shadow:0 0 6px rgba(0,0,0,.35);overflow:hidden;"></div>
<div style="left:356px;top:828px;width:1236px;height:30px;background:#f3f3f3;border-radius:8px 8px 0 0;"></div>
<svg style="left:364.4px;top:833.5px;" width="17" height="17" viewBox="0 0 17 17"><path d="M0.800 2.500Q1.500 8 2 11.500Q4.500 13 7.500 14.500L8 14L9 13Q12.500 9 14.200 2.500Z" fill="#2a70c8"/><ellipse cx="7.500" cy="2.300" rx="7" ry="1.800" fill="#1458b0"/><ellipse cx="7.500" cy="2.200" rx="4.500" ry="0.800" fill="#0c3a80"/><path d="M2 4.800q5.500 1.200 10.500-0.300M2.300 6.800q4.500 1 9-0.400M2.500 8.800q3 0.800 6 0" stroke="#8ec0f4" stroke-width="0.900" fill="none"/><rect x="5.300" y="10.800" width="9.800" height="5.200" rx="0.800" fill="#fff" stroke="#9ab0e8" stroke-width="0.900"/><rect x="6" y="11.800" width="8.400" height="1.800" fill="#10e810"/><rect x="6" y="13.700" width="8.400" height="1.600" fill="#f0f060"/></svg>
<span style="left:385.7px;top:835.67px;font-size:12.5px;line-height:15px;color:#8a8a8a;letter-spacing:-0.834px;">Messages</span>
<svg style="left:1472px;top:836px;" width="12" height="12" viewBox="0 0 12 12"><path d="M0 6.500h10" stroke="#999" stroke-width="1"/></svg>
<svg style="left:1518px;top:837px;" width="11" height="11" viewBox="0 0 11 11"><rect x="0.500" y="0.500" width="9" height="9" rx="1" stroke="#999" fill="none"/></svg>
<svg style="left:1563px;top:837px;" width="11" height="11" viewBox="0 0 11 11"><path d="M0.500 0.500l10 10M10.500 0.500l-10 10" stroke="#999" fill="none"/></svg>
<div style="left:356px;top:858px;width:16px;height:96.5px;background:#ffffc0;border-radius:0 0 0 7px;"></div>
<svg style="left:359px;top:861px;" width="11" height="10" viewBox="0 0 11 10"><path d="M1.500 1.500l8 7M9.500 1.500l-8 7" stroke="#000080" stroke-width="2.200"/></svg>
<div style="left:1575px;top:858px;width:17px;height:96.5px;background:#f0f0f0;border-radius:0 0 7px 0;"></div>
<div style="left:1583px;top:893px;width:2px;height:45px;background:#7a7a7a;border-radius:1px;"></div>
<div style="left:372px;top:858px;width:1203px;height:11px;background:#ffff00;"></div>
<div style="left:372px;top:869px;width:1203px;height:7px;background:linear-gradient(180deg,#ffff00,#e0e070 50%,#a8c4d4);"></div>
<span style="left:373.4px;top:859.84px;font-size:12px;line-height:14px;color:#000;letter-spacing:-0.258px;">...Project checks, Conseils : 3</span>
<div style="left:372px;top:876px;width:1203px;height:12px;overflow:hidden;">
<svg style="left:3px;top:-3px;" width="12" height="9" viewBox="0 0 12 9"><path d="M0.500 0.500h11v8h-11z" fill="#fbe9a0" stroke="#d8b850"/></svg>
<span style="left:17.2px;top:-3.66px;font-size:12px;line-height:14px;color:#000;letter-spacing:-0.054px;">Note: l&#x27;option &quot;-gl&quot; est passée deux fois au compilateur avec des valeurs différentes</span>
</div>
<div style="left:372px;top:887px;width:1203px;height:17px;background:#66ff66;"></div>
<span style="left:373.4px;top:889.34px;font-size:12px;line-height:14px;color:#000;letter-spacing:-0.094px;">Compilation du projet, Cible : C:\codetyphon\CodeOcean\20_Games\samples\xbin\gmazes.exe : Succès, Avertissements : 1, Conseils : 2</span>
<svg style="left:375px;top:906px;" width="12" height="12" viewBox="0 0 12 12"><path d="M6 0.500l5.500 10.500h-11z" fill="#f8c820" stroke="#c89010" stroke-width="0.700"/><path d="M6 4v4" stroke="#222" stroke-width="1.400"/><circle cx="6" cy="9.500" r="0.800" fill="#222"/></svg>
<span style="left:389.2px;top:906.34px;font-size:12px;line-height:14px;color:#000;letter-spacing:-0.058px;">ufrmscaling.pas(113,66) Warning: Conversion between ordinals and pointers is not portable</span>
<svg style="left:375px;top:923px;" width="12" height="12" viewBox="0 0 12 12"><path d="M1.500 1h9a1 1 0 0 1 1 1v5a1 1 0 0 1-1 1h-5l-2.500 3v-3h-1.500a1 1 0 0 1-1-1v-5a1 1 0 0 1 1-1z" fill="#e4f0ff" stroke="#2a6fe0" stroke-width="1.100"/></svg>
<svg style="left:375px;top:940px;" width="12" height="12" viewBox="0 0 12 12"><path d="M1.500 1h9a1 1 0 0 1 1 1v5a1 1 0 0 1-1 1h-5l-2.500 3v-3h-1.500a1 1 0 0 1-1-1v-5a1 1 0 0 1 1-1z" fill="#e4f0ff" stroke="#2a6fe0" stroke-width="1.100"/></svg>
<span style="left:389.2px;top:923.34px;font-size:12px;line-height:14px;color:#000;letter-spacing:-0.085px;">gmazesmw.pas(268,17) Hint: Conversion between ordinals and pointers is not portable</span>
<span style="left:389.2px;top:940.14px;font-size:12px;line-height:14px;color:#000;letter-spacing:-0.117px;">gmazesmw.pas(26,30) Hint: Unit &quot;Types&quot; not used in gmazesmw</span>
<div style="left:718px;top:311px;width:459px;height:440px;background:#573232;border-radius:8px;box-shadow:0 8px 36px rgba(0,0,0,.45),0 0 2px rgba(0,0,0,.5);overflow:hidden;"></div>
<svg style="left:718px;top:362px;overflow:hidden;border-radius:0 0 8px 8px;" width="459" height="389" viewBox="0 0 459 389"><defs><filter id="bl" x="-20%" y="-20%" width="140%" height="140%"><feGaussianBlur stdDeviation="2.500"/></filter><radialGradient id="fl" cx="0.5" cy="0.5" r="0.5"><stop offset="0" stop-color="#c89292" stop-opacity="1"/><stop offset="0.22" stop-color="#b07272" stop-opacity="0.85"/><stop offset="0.5" stop-color="#8a5050" stop-opacity="0.5"/><stop offset="0.8" stop-color="#704040" stop-opacity="0.15"/><stop offset="1" stop-color="#573232" stop-opacity="0"/></radialGradient><radialGradient id="fl2" cx="0.5" cy="0.5" r="0.5"><stop offset="0" stop-color="#9a6060" stop-opacity="0.32"/><stop offset="1" stop-color="#573232" stop-opacity="0"/></radialGradient></defs><rect x="0" y="0" width="459" height="389" fill="#563131"/><ellipse cx="150" cy="50" rx="300" ry="150" fill="url(#fl2)"/><circle cx="91" cy="71" r="112" fill="url(#fl)"/><circle cx="93" cy="74" r="57" fill="none" stroke="#b07070" stroke-opacity="0.2" stroke-width="7" filter="url(#bl)"/><path d="M30 5L140 60M160 15L91 71L10 100M91 71L40 125" stroke="#b07070" stroke-opacity="0.14" stroke-width="8" filter="url(#bl)" fill="none"/><rect x="2" y="2" width="10" height="9" fill="#8a5656" opacity="0.5"/><path d="M13.9 12.5h13.5M40.9 12.5h13.5M54.4 12.5h13.5M81.5 0.6v11.4M94.9 12.5h13.5M108.4 12.5h13.5M121.9 12.5h13.5M148.9 12.5h13.5M162.4 12.5h13.5M202.9 12.5h13.5M216.4 12.5h13.5M229.9 12.5h13.5M243.4 12.5h13.5M256.9 12.5h13.5M297.4 12.5h13.5M337.9 12.5h13.5M351.4 12.5h13.5M364.9 12.5h13.5M405.4 12.5h13.5M418.9 12.5h13.5M432.4 12.5h13.5M445.9 12.5h13.5M81.5 12.0v11.4M108.5 12.0v11.4M135.5 12.0v11.4M189.5 12.0v11.4M243.5 12.0v11.4M270.5 12.0v11.4M324.5 12.0v11.4M378.5 12.0v11.4M405.5 12.0v11.4M432.5 12.0v11.4M13.9 34.5h13.5M40.9 34.5h13.5M54.4 34.5h13.5M67.9 34.5h13.5M81.4 34.5h13.5M94.9 34.5h13.5M108.4 34.5h13.5M135.5 23.5v11.4M148.9 34.5h13.5M162.4 34.5h13.5M175.9 34.5h13.5M189.4 34.5h13.5M202.9 34.5h13.5M216.4 34.5h13.5M229.9 34.5h13.5M243.4 34.5h13.5M270.5 23.5v11.4M297.5 23.5v11.4M297.4 34.5h13.5M324.5 23.5v11.4M310.9 34.5h13.5M351.5 23.5v11.4M364.9 34.5h13.5M405.4 34.5h13.5M418.9 34.5h13.5M432.4 34.5h13.5M81.5 34.9v11.4M135.5 34.9v11.4M162.5 34.9v11.4M189.5 34.9v11.4M216.5 34.9v11.4M270.5 34.9v11.4M351.5 34.9v11.4M378.5 34.9v11.4M405.5 34.9v11.4M13.9 57.5h13.5M54.5 46.3v11.4M54.4 57.5h13.5M67.9 57.5h13.5M81.4 57.5h13.5M94.9 57.5h13.5M108.4 57.5h13.5M148.9 57.5h13.5M162.4 57.5h13.5M175.9 57.5h13.5M189.4 57.5h13.5M216.5 46.3v11.4M243.4 57.5h13.5M270.5 46.3v11.4M270.4 57.5h13.5M283.9 57.5h13.5M297.4 57.5h13.5M324.5 46.3v11.4M310.9 57.5h13.5M337.9 57.5h13.5M378.5 46.3v11.4M378.4 57.5h13.5M405.5 46.3v11.4M432.4 57.5h13.5M445.9 57.5h13.5M27.5 57.8v11.4M54.5 57.8v11.4M81.5 57.8v11.4M135.5 57.8v11.4M162.5 57.8v11.4M216.5 57.8v11.4M351.5 57.8v11.4M432.5 57.8v11.4M27.5 69.2v11.4M40.9 80.5h13.5M54.4 80.5h13.5M67.9 80.5h13.5M81.4 80.5h13.5M108.4 80.5h13.5M121.9 80.5h13.5M135.4 80.5h13.5M162.5 69.2v11.4M148.9 80.5h13.5M175.9 80.5h13.5M189.4 80.5h13.5M216.5 69.2v11.4M202.9 80.5h13.5M216.4 80.5h13.5M229.9 80.5h13.5M256.9 80.5h13.5M297.5 69.2v11.4M297.4 80.5h13.5M324.5 69.2v11.4M324.4 80.5h13.5M337.9 80.5h13.5M351.4 80.5h13.5M364.9 80.5h13.5M378.4 80.5h13.5M391.9 80.5h13.5M432.5 69.2v11.4M418.9 80.5h13.5M432.4 80.5h13.5M27.5 80.6v11.4M135.5 80.6v11.4M162.5 80.6v11.4M243.5 80.6v11.4M405.5 80.6v11.4M54.5 92.0v11.4M54.4 103.5h13.5M81.5 92.0v11.4M108.5 92.0v11.4M94.9 103.5h13.5M135.5 92.0v11.4M121.9 103.5h13.5M148.9 103.5h13.5M162.4 103.5h13.5M175.9 103.5h13.5M202.9 103.5h13.5M243.5 92.0v11.4M243.4 103.5h13.5M270.4 103.5h13.5M283.9 103.5h13.5M297.4 103.5h13.5M324.4 103.5h13.5M337.9 103.5h13.5M351.4 103.5h13.5M364.9 103.5h13.5M378.4 103.5h13.5M405.5 92.0v11.4M432.4 103.5h13.5M27.5 103.5v11.4M54.5 103.5v11.4M81.5 103.5v11.4M189.5 103.5v11.4M216.5 103.5v11.4M270.5 103.5v11.4M324.5 103.5v11.4M351.5 103.5v11.4M405.5 103.5v11.4M0.4 126.5h13.5M27.5 114.9v11.4M40.9 126.5h13.5M54.4 126.5h13.5M81.4 126.5h13.5M94.9 126.5h13.5M135.5 114.9v11.4M162.5 114.9v11.4M189.5 114.9v11.4M189.4 126.5h13.5M202.9 126.5h13.5M216.4 126.5h13.5M243.5 114.9v11.4M243.4 126.5h13.5M256.9 126.5h13.5M270.4 126.5h13.5M297.4 126.5h13.5M310.9 126.5h13.5M324.4 126.5h13.5M337.9 126.5h13.5M378.5 114.9v11.4M405.4 126.5h13.5M418.9 126.5h13.5M27.5 126.3v11.4M81.5 126.3v11.4M162.5 126.3v11.4M243.5 126.3v11.4M351.5 126.3v11.4M378.5 126.3v11.4M0.4 149.5h13.5M54.4 149.5h13.5M67.9 149.5h13.5M81.4 149.5h13.5M108.4 149.5h13.5M135.5 137.8v11.4M162.5 137.8v11.4M148.9 149.5h13.5M162.4 149.5h13.5M189.5 137.8v11.4M202.9 149.5h13.5M216.4 149.5h13.5M229.9 149.5h13.5M256.9 149.5h13.5M270.4 149.5h13.5M297.5 137.8v11.4M283.9 149.5h13.5M310.9 149.5h13.5M324.4 149.5h13.5M351.5 137.8v11.4M337.9 149.5h13.5M378.5 137.8v11.4M364.9 149.5h13.5M405.4 149.5h13.5M432.5 137.8v11.4M27.5 149.2v11.4M54.5 149.2v11.4M135.5 149.2v11.4M162.5 149.2v11.4M189.5 149.2v11.4M243.5 149.2v11.4M297.5 149.2v11.4M324.5 149.2v11.4M405.5 149.2v11.4M27.4 172.5h13.5M54.5 160.6v11.4M40.9 172.5h13.5M108.4 172.5h13.5M135.5 160.6v11.4M121.9 172.5h13.5M162.5 160.6v11.4M189.5 160.6v11.4M243.5 160.6v11.4M243.4 172.5h13.5M270.5 160.6v11.4M256.9 172.5h13.5M283.9 172.5h13.5M297.4 172.5h13.5M324.5 160.6v11.4M310.9 172.5h13.5M324.4 172.5h13.5M351.5 160.6v11.4M364.9 172.5h13.5M378.4 172.5h13.5M391.9 172.5h13.5M405.4 172.5h13.5M418.9 172.5h13.5M27.5 172.0v11.4M81.5 172.0v11.4M162.5 172.0v11.4M189.5 172.0v11.4M216.5 172.0v11.4M270.5 172.0v11.4M297.5 172.0v11.4M351.5 172.0v11.4M432.5 172.0v11.4M0.4 194.5h13.5M27.5 183.5v11.4M27.4 194.5h13.5M40.9 194.5h13.5M81.5 183.5v11.4M108.5 183.5v11.4M94.9 194.5h13.5M108.4 194.5h13.5M135.5 183.5v11.4M121.9 194.5h13.5M148.9 194.5h13.5M162.4 194.5h13.5M189.4 194.5h13.5M216.5 183.5v11.4M202.9 194.5h13.5M216.4 194.5h13.5M243.5 183.5v11.4M229.9 194.5h13.5M270.5 183.5v11.4M256.9 194.5h13.5M283.9 194.5h13.5M297.4 194.5h13.5M378.5 183.5v11.4M391.9 194.5h13.5M405.4 194.5h13.5M432.5 183.5v11.4M418.9 194.5h13.5M432.4 194.5h13.5M27.5 194.9v11.4M54.5 194.9v11.4M81.5 194.9v11.4M189.5 194.9v11.4M243.5 194.9v11.4M324.5 194.9v11.4M351.5 194.9v11.4M378.5 194.9v11.4M432.5 194.9v11.4M27.5 206.3v11.4M13.9 217.5h13.5M27.4 217.5h13.5M54.4 217.5h13.5M81.5 206.3v11.4M67.9 217.5h13.5M108.5 206.3v11.4M94.9 217.5h13.5M108.4 217.5h13.5M135.5 206.3v11.4M121.9 217.5h13.5M148.9 217.5h13.5M175.9 217.5h13.5M189.4 217.5h13.5M243.5 206.3v11.4M229.9 217.5h13.5M243.4 217.5h13.5M256.9 217.5h13.5M270.4 217.5h13.5M297.5 206.3v11.4M283.9 217.5h13.5M324.4 217.5h13.5M351.4 217.5h13.5M378.5 206.3v11.4M378.4 217.5h13.5M391.9 217.5h13.5M432.5 206.3v11.4M162.5 217.8v11.4M189.5 217.8v11.4M216.5 217.8v11.4M297.5 217.8v11.4M405.5 217.8v11.4M432.5 217.8v11.4M27.5 229.2v11.4M54.4 240.5h13.5M67.9 240.5h13.5M108.5 229.2v11.4M94.9 240.5h13.5M108.4 240.5h13.5M135.5 229.2v11.4M135.4 240.5h13.5M189.5 229.2v11.4M216.5 229.2v11.4M202.9 240.5h13.5M243.5 229.2v11.4M229.9 240.5h13.5M256.9 240.5h13.5M270.4 240.5h13.5M297.4 240.5h13.5M324.5 229.2v11.4M310.9 240.5h13.5M337.9 240.5h13.5M364.9 240.5h13.5M405.5 229.2v11.4M405.4 240.5h13.5M432.4 240.5h13.5M27.5 240.6v11.4M54.5 240.6v11.4M81.5 240.6v11.4M162.5 240.6v11.4M189.5 240.6v11.4M243.5 240.6v11.4M297.5 240.6v11.4M324.5 240.6v11.4M351.5 240.6v11.4M432.5 240.6v11.4M27.5 252.1v11.4M40.9 263.5h13.5M54.4 263.5h13.5M67.9 263.5h13.5M81.4 263.5h13.5M108.5 252.1v11.4M121.9 263.5h13.5M189.4 263.5h13.5M243.5 252.1v11.4M229.9 263.5h13.5M270.5 252.1v11.4M297.5 252.1v11.4M310.9 263.5h13.5M324.4 263.5h13.5M351.5 252.1v11.4M351.4 263.5h13.5M378.4 263.5h13.5M391.9 263.5h13.5M405.4 263.5h13.5M432.4 263.5h13.5M445.9 263.5h13.5M27.5 263.5v11.4M108.5 263.5v11.4M135.5 263.5v11.4M162.5 263.5v11.4M216.5 263.5v11.4M243.5 263.5v11.4M297.5 263.5v11.4M378.5 263.5v11.4M405.5 263.5v11.4M432.5 263.5v11.4M0.4 286.5h13.5M13.9 286.5h13.5M54.5 274.9v11.4M40.9 286.5h13.5M67.9 286.5h13.5M81.4 286.5h13.5M108.4 286.5h13.5M135.5 274.9v11.4M121.9 286.5h13.5M135.4 286.5h13.5M162.5 274.9v11.4M189.5 274.9v11.4M175.9 286.5h13.5M189.4 286.5h13.5M216.5 274.9v11.4M243.5 274.9v11.4M243.4 286.5h13.5M270.5 274.9v11.4M297.5 274.9v11.4M283.9 286.5h13.5M297.4 286.5h13.5M324.5 274.9v11.4M310.9 286.5h13.5M324.4 286.5h13.5M351.4 286.5h13.5M364.9 286.5h13.5M378.4 286.5h13.5M405.5 274.9v11.4M418.9 286.5h13.5M432.4 286.5h13.5M27.5 286.4v11.4M108.5 286.4v11.4M162.5 286.4v11.4M216.5 286.4v11.4M378.5 286.4v11.4M13.9 309.5h13.5M27.4 309.5h13.5M40.9 309.5h13.5M54.4 309.5h13.5M67.9 309.5h13.5M81.4 309.5h13.5M108.5 297.8v11.4M94.9 309.5h13.5M135.5 297.8v11.4M135.4 309.5h13.5M162.5 297.8v11.4M162.4 309.5h13.5M189.5 297.8v11.4M175.9 309.5h13.5M216.5 297.8v11.4M202.9 309.5h13.5M216.4 309.5h13.5M243.5 297.8v11.4M256.9 309.5h13.5M270.4 309.5h13.5M297.4 309.5h13.5M324.4 309.5h13.5M351.4 309.5h13.5M378.5 297.8v11.4M391.9 309.5h13.5M405.4 309.5h13.5M432.5 297.8v11.4M418.9 309.5h13.5M162.5 309.2v11.4M189.5 309.2v11.4M297.5 309.2v11.4M324.5 309.2v11.4M13.9 332.5h13.5M27.4 332.5h13.5M40.9 332.5h13.5M54.4 332.5h13.5M81.5 320.6v11.4M81.4 332.5h13.5M108.5 320.6v11.4M108.4 332.5h13.5M121.9 332.5h13.5M162.5 320.6v11.4M175.9 332.5h13.5M216.5 320.6v11.4M216.4 332.5h13.5M229.9 332.5h13.5M243.4 332.5h13.5M270.5 320.6v11.4M256.9 332.5h13.5M270.4 332.5h13.5M297.5 320.6v11.4M283.9 332.5h13.5M310.9 332.5h13.5M351.5 320.6v11.4M378.4 332.5h13.5M405.5 320.6v11.4M81.5 332.1v11.4M108.5 332.1v11.4M135.5 332.1v11.4M270.5 332.1v11.4M324.5 332.1v11.4M351.5 332.1v11.4M378.5 332.1v11.4M405.5 332.1v11.4M432.5 332.1v11.4M13.9 354.5h13.5M27.4 354.5h13.5M40.9 354.5h13.5M81.4 354.5h13.5M94.9 354.5h13.5M108.4 354.5h13.5M135.5 343.5v11.4M121.9 354.5h13.5M135.4 354.5h13.5M148.9 354.5h13.5M189.5 343.5v11.4M189.4 354.5h13.5M216.5 343.5v11.4M202.9 354.5h13.5M243.5 343.5v11.4M229.9 354.5h13.5M270.5 343.5v11.4M270.4 354.5h13.5M297.5 343.5v11.4M324.5 343.5v11.4M310.9 354.5h13.5M337.9 354.5h13.5M351.4 354.5h13.5M364.9 354.5h13.5M391.9 354.5h13.5M405.4 354.5h13.5M432.5 343.5v11.4M418.9 354.5h13.5M54.5 354.9v11.4M81.5 354.9v11.4M297.5 354.9v11.4M324.5 354.9v11.4M378.5 354.9v11.4M432.5 354.9v11.4M54.5 366.4v11.4M81.5 366.4v11.4M81.4 377.5h13.5M94.9 377.5h13.5M202.9 377.5h13.5M216.4 377.5h13.5M229.9 377.5h13.5M243.4 377.5h13.5M270.5 366.4v11.4M283.9 377.5h13.5M310.9 377.5h13.5M351.4 377.5h13.5M378.5 366.4v11.4M364.9 377.5h13.5M405.5 366.4v11.4M405.4 377.5h13.5M432.5 366.4v11.4M418.9 377.5h13.5M27.5 377.8v11.4M54.5 377.8v11.4M108.5 377.8v11.4M135.5 377.8v11.4M162.5 377.8v11.4M189.5 377.8v11.4M270.5 377.8v11.4M324.5 377.8v11.4" stroke="#805252" stroke-opacity="0.75" stroke-width="1" fill="none"/><path d="M13.5 0.6v11.4M283.5 0.6v11.4M310.5 0.6v11.4M391.5 0.6v11.4M13.5 12.0v11.4M40.5 12.0v11.4M27.4 23.5h13.5M54.4 23.5h13.5M67.9 23.5h13.5M81.4 23.5h13.5M94.9 23.5h13.5M135.4 23.5h13.5M148.9 23.5h13.5M175.5 12.0v11.4M202.5 12.0v11.4M189.4 23.5h13.5M216.4 23.5h13.5M283.5 12.0v11.4M310.5 12.0v11.4M324.4 23.5h13.5M337.9 23.5h13.5M364.5 12.0v11.4M391.5 12.0v11.4M13.5 23.5v11.4M40.5 23.5v11.4M121.5 23.5v11.4M175.5 23.5v11.4M229.5 23.5v11.4M256.5 23.5v11.4M283.5 23.5v11.4M364.5 23.5v11.4M391.5 23.5v11.4M418.5 23.5v11.4M445.5 23.5v11.4M0.4 46.5h13.5M13.9 46.5h13.5M40.5 34.9v11.4M27.4 46.5h13.5M67.9 46.5h13.5M94.9 46.5h13.5M108.4 46.5h13.5M121.9 46.5h13.5M135.4 46.5h13.5M229.9 46.5h13.5M243.4 46.5h13.5M256.9 46.5h13.5M283.5 34.9v11.4M283.9 46.5h13.5M310.5 34.9v11.4M297.4 46.5h13.5M337.5 34.9v11.4M324.4 46.5h13.5M351.4 46.5h13.5M391.5 34.9v11.4M391.9 46.5h13.5M418.9 46.5h13.5M432.4 46.5h13.5M40.5 46.3v11.4M94.5 46.3v11.4M148.5 46.3v11.4M175.5 46.3v11.4M202.5 46.3v11.4M229.5 46.3v11.4M337.5 46.3v11.4M364.5 46.3v11.4M418.5 46.3v11.4M13.5 57.8v11.4M40.5 57.8v11.4M94.9 69.5h13.5M108.4 69.5h13.5M121.9 69.5h13.5M135.4 69.5h13.5M175.5 57.8v11.4M189.4 69.5h13.5M202.9 69.5h13.5M229.5 57.8v11.4M229.9 69.5h13.5M256.5 57.8v11.4M243.4 69.5h13.5M256.9 69.5h13.5M270.4 69.5h13.5M297.4 69.5h13.5M310.9 69.5h13.5M337.9 69.5h13.5M364.5 57.8v11.4M364.9 69.5h13.5M391.5 57.8v11.4M391.9 69.5h13.5M418.5 57.8v11.4M405.4 69.5h13.5M445.9 69.5h13.5M13.5 69.2v11.4M40.5 69.2v11.4M67.5 69.2v11.4M94.5 69.2v11.4M283.5 69.2v11.4M391.5 69.2v11.4M13.9 92.5h13.5M27.4 92.5h13.5M67.5 80.6v11.4M94.5 80.6v11.4M94.9 92.5h13.5M108.4 92.5h13.5M175.5 80.6v11.4M189.4 92.5h13.5M202.9 92.5h13.5M216.4 92.5h13.5M256.5 80.6v11.4M283.5 80.6v11.4M270.4 92.5h13.5M283.9 92.5h13.5M297.4 92.5h13.5M310.9 92.5h13.5M324.4 92.5h13.5M337.9 92.5h13.5M364.5 80.6v11.4M351.4 92.5h13.5M378.4 92.5h13.5M405.4 92.5h13.5M418.9 92.5h13.5M432.4 92.5h13.5M13.5 92.0v11.4M40.5 92.0v11.4M67.5 92.0v11.4M148.5 92.0v11.4M175.5 92.0v11.4M202.5 92.0v11.4M229.5 92.0v11.4M256.5 92.0v11.4M391.5 92.0v11.4M445.5 92.0v11.4M13.5 103.5v11.4M27.4 114.5h13.5M40.9 114.5h13.5M67.9 114.5h13.5M81.4 114.5h13.5M94.9 114.5h13.5M121.5 103.5v11.4M108.4 114.5h13.5M148.5 103.5v11.4M135.4 114.5h13.5M162.4 114.5h13.5M175.9 114.5h13.5M216.4 114.5h13.5M229.9 114.5h13.5M256.5 103.5v11.4M256.9 114.5h13.5M283.9 114.5h13.5M310.5 103.5v11.4M364.5 103.5v11.4M378.4 114.5h13.5M391.9 114.5h13.5M418.5 103.5v11.4M418.9 114.5h13.5M432.4 114.5h13.5M445.9 114.5h13.5M13.5 114.9v11.4M67.5 114.9v11.4M121.5 114.9v11.4M202.5 114.9v11.4M283.5 114.9v11.4M310.5 114.9v11.4M337.5 114.9v11.4M364.5 114.9v11.4M391.5 114.9v11.4M418.5 114.9v11.4M13.9 137.5h13.5M27.4 137.5h13.5M40.9 137.5h13.5M54.4 137.5h13.5M67.9 137.5h13.5M94.9 137.5h13.5M121.5 126.3v11.4M108.4 137.5h13.5M121.9 137.5h13.5M148.5 126.3v11.4M135.4 137.5h13.5M175.5 126.3v11.4M175.9 137.5h13.5M189.4 137.5h13.5M202.9 137.5h13.5M216.4 137.5h13.5M229.9 137.5h13.5M243.4 137.5h13.5M256.9 137.5h13.5M283.5 126.3v11.4M283.9 137.5h13.5M297.4 137.5h13.5M310.9 137.5h13.5M324.4 137.5h13.5M364.5 126.3v11.4M351.4 137.5h13.5M391.5 126.3v11.4M391.9 137.5h13.5M418.5 126.3v11.4M445.5 126.3v11.4M432.4 137.5h13.5M445.9 137.5h13.5M40.5 137.8v11.4M94.5 137.8v11.4M391.5 137.8v11.4M418.5 137.8v11.4M13.9 160.5h13.5M40.5 149.2v11.4M27.4 160.5h13.5M67.9 160.5h13.5M81.4 160.5h13.5M94.9 160.5h13.5M121.5 149.2v11.4M108.4 160.5h13.5M148.5 149.2v11.4M175.9 160.5h13.5M202.5 149.2v11.4M202.9 160.5h13.5M216.4 160.5h13.5M256.5 149.2v11.4M270.4 160.5h13.5M297.4 160.5h13.5M364.5 149.2v11.4M351.4 160.5h13.5M364.9 160.5h13.5M391.5 149.2v11.4M405.4 160.5h13.5M418.9 160.5h13.5M445.5 149.2v11.4M432.4 160.5h13.5M13.5 160.6v11.4M67.5 160.6v11.4M94.5 160.6v11.4M148.5 160.6v11.4M175.5 160.6v11.4M202.5 160.6v11.4M229.5 160.6v11.4M283.5 160.6v11.4M337.5 160.6v11.4M391.5 160.6v11.4M445.5 160.6v11.4M13.9 183.5h13.5M40.9 183.5h13.5M67.5 172.0v11.4M54.4 183.5h13.5M94.5 172.0v11.4M94.9 183.5h13.5M121.5 172.0v11.4M135.4 183.5h13.5M148.9 183.5h13.5M175.5 172.0v11.4M189.4 183.5h13.5M202.9 183.5h13.5M229.5 172.0v11.4M243.4 183.5h13.5M324.4 183.5h13.5M337.9 183.5h13.5M364.5 172.0v11.4M378.4 183.5h13.5M391.9 183.5h13.5M445.5 172.0v11.4M67.5 183.5v11.4M175.5 183.5v11.4M283.5 183.5v11.4M310.5 183.5v11.4M337.5 183.5v11.4M364.5 183.5v11.4M418.5 183.5v11.4M13.5 194.9v11.4M67.5 194.9v11.4M94.5 194.9v11.4M81.4 206.5h13.5M121.5 194.9v11.4M148.5 194.9v11.4M135.4 206.5h13.5M162.4 206.5h13.5M202.9 206.5h13.5M256.5 194.9v11.4M256.9 206.5h13.5M283.5 194.9v11.4M270.4 206.5h13.5M310.5 194.9v11.4M310.9 206.5h13.5M337.5 194.9v11.4M337.9 206.5h13.5M351.4 206.5h13.5M364.9 206.5h13.5M391.5 194.9v11.4M405.4 206.5h13.5M445.9 206.5h13.5M40.5 206.3v11.4M148.5 206.3v11.4M175.5 206.3v11.4M202.5 206.3v11.4M229.5 206.3v11.4M310.5 206.3v11.4M337.5 206.3v11.4M418.5 206.3v11.4M445.5 206.3v11.4M0.4 229.5h13.5M13.9 229.5h13.5M40.5 217.8v11.4M40.9 229.5h13.5M67.5 217.8v11.4M94.5 217.8v11.4M81.4 229.5h13.5M121.9 229.5h13.5M148.9 229.5h13.5M162.4 229.5h13.5M229.5 217.8v11.4M216.4 229.5h13.5M256.9 229.5h13.5M283.9 229.5h13.5M310.5 217.8v11.4M324.4 229.5h13.5M337.9 229.5h13.5M364.5 217.8v11.4M351.4 229.5h13.5M378.4 229.5h13.5M418.5 217.8v11.4M445.5 217.8v11.4M40.5 229.2v11.4M67.5 229.2v11.4M94.5 229.2v11.4M148.5 229.2v11.4M175.5 229.2v11.4M202.5 229.2v11.4M256.5 229.2v11.4M283.5 229.2v11.4M310.5 229.2v11.4M364.5 229.2v11.4M391.5 229.2v11.4M418.5 229.2v11.4M445.5 229.2v11.4M13.5 240.6v11.4M0.4 252.5h13.5M40.5 240.6v11.4M81.4 252.5h13.5M94.9 252.5h13.5M121.5 240.6v11.4M135.4 252.5h13.5M148.9 252.5h13.5M162.4 252.5h13.5M175.9 252.5h13.5M189.4 252.5h13.5M202.9 252.5h13.5M229.5 240.6v11.4M216.4 252.5h13.5M243.4 252.5h13.5M256.9 252.5h13.5M283.5 240.6v11.4M337.5 240.6v11.4M364.5 240.6v11.4M364.9 252.5h13.5M391.5 240.6v11.4M378.4 252.5h13.5M391.9 252.5h13.5M418.5 240.6v11.4M432.4 252.5h13.5M40.5 252.1v11.4M67.5 252.1v11.4M121.5 252.1v11.4M148.5 252.1v11.4M175.5 252.1v11.4M202.5 252.1v11.4M283.5 252.1v11.4M310.5 252.1v11.4M337.5 252.1v11.4M418.5 252.1v11.4M13.5 263.5v11.4M13.9 274.5h13.5M27.4 274.5h13.5M40.9 274.5h13.5M54.4 274.5h13.5M67.9 274.5h13.5M94.5 263.5v11.4M94.9 274.5h13.5M108.4 274.5h13.5M135.4 274.5h13.5M148.9 274.5h13.5M175.5 263.5v11.4M202.5 263.5v11.4M216.4 274.5h13.5M256.5 263.5v11.4M256.9 274.5h13.5M283.5 263.5v11.4M270.4 274.5h13.5M310.5 263.5v11.4M337.5 263.5v11.4M337.9 274.5h13.5M351.4 274.5h13.5M364.9 274.5h13.5M405.4 274.5h13.5M418.9 274.5h13.5M94.5 274.9v11.4M175.5 274.9v11.4M391.5 274.9v11.4M445.5 274.9v11.4M40.5 286.4v11.4M67.5 286.4v11.4M54.4 297.5h13.5M67.9 297.5h13.5M81.4 297.5h13.5M121.9 297.5h13.5M148.5 286.4v11.4M175.5 286.4v11.4M202.5 286.4v11.4M229.5 286.4v11.4M229.9 297.5h13.5M256.5 286.4v11.4M243.4 297.5h13.5M256.9 297.5h13.5M283.5 286.4v11.4M270.4 297.5h13.5M283.9 297.5h13.5M310.9 297.5h13.5M337.5 286.4v11.4M337.9 297.5h13.5M351.4 297.5h13.5M391.5 286.4v11.4M391.9 297.5h13.5M418.5 286.4v11.4M405.4 297.5h13.5M445.5 286.4v11.4M432.4 297.5h13.5M13.5 297.8v11.4M40.5 297.8v11.4M121.5 297.8v11.4M202.5 297.8v11.4M310.5 297.8v11.4M337.5 297.8v11.4M364.5 297.8v11.4M13.5 309.2v11.4M27.4 320.5h13.5M54.4 320.5h13.5M67.9 320.5h13.5M94.5 309.2v11.4M121.5 309.2v11.4M121.9 320.5h13.5M135.4 320.5h13.5M189.4 320.5h13.5M202.9 320.5h13.5M229.5 309.2v11.4M229.9 320.5h13.5M256.5 309.2v11.4M243.4 320.5h13.5M283.5 309.2v11.4M310.5 309.2v11.4M324.4 320.5h13.5M364.5 309.2v11.4M364.9 320.5h13.5M391.5 309.2v11.4M418.9 320.5h13.5M445.5 309.2v11.4M432.4 320.5h13.5M40.5 320.6v11.4M94.5 320.6v11.4M148.5 320.6v11.4M175.5 320.6v11.4M202.5 320.6v11.4M310.5 320.6v11.4M337.5 320.6v11.4M364.5 320.6v11.4M391.5 320.6v11.4M418.5 320.6v11.4M445.5 320.6v11.4M13.5 332.1v11.4M27.4 343.5h13.5M40.9 343.5h13.5M54.4 343.5h13.5M67.9 343.5h13.5M94.9 343.5h13.5M108.4 343.5h13.5M148.5 332.1v11.4M148.9 343.5h13.5M175.5 332.1v11.4M162.4 343.5h13.5M202.5 332.1v11.4M189.4 343.5h13.5M243.4 343.5h13.5M256.9 343.5h13.5M283.9 343.5h13.5M337.5 332.1v11.4M351.4 343.5h13.5M364.9 343.5h13.5M391.5 332.1v11.4M418.5 332.1v11.4M405.4 343.5h13.5M445.5 332.1v11.4M13.5 343.5v11.4M67.5 343.5v11.4M175.5 343.5v11.4M229.5 343.5v11.4M310.5 343.5v11.4M337.5 343.5v11.4M391.5 343.5v11.4M445.5 343.5v11.4M0.4 366.5h13.5M13.9 366.5h13.5M27.4 366.5h13.5M67.5 354.9v11.4M94.9 366.5h13.5M108.4 366.5h13.5M121.9 366.5h13.5M135.4 366.5h13.5M148.9 366.5h13.5M175.5 354.9v11.4M162.4 366.5h13.5M175.9 366.5h13.5M189.4 366.5h13.5M202.9 366.5h13.5M229.5 354.9v11.4M256.5 354.9v11.4M243.4 366.5h13.5M256.9 366.5h13.5M283.5 354.9v11.4M297.4 366.5h13.5M324.4 366.5h13.5M337.9 366.5h13.5M351.4 366.5h13.5M378.4 366.5h13.5M391.9 366.5h13.5M405.4 366.5h13.5M445.5 354.9v11.4M13.5 366.4v11.4M40.5 366.4v11.4M67.5 366.4v11.4M121.5 366.4v11.4M148.5 366.4v11.4M175.5 366.4v11.4M202.5 366.4v11.4M229.5 366.4v11.4M283.5 366.4v11.4M310.5 366.4v11.4M337.5 366.4v11.4M445.5 366.4v11.4M391.5 377.8v11.4M445.5 377.8v11.4" stroke="#3e2020" stroke-opacity="0.55" stroke-width="1" fill="none"/></svg>
<div style="left:718px;top:311px;width:459px;height:31px;background:#eff4f9;border-radius:8px 8px 0 0;"></div>
<div style="left:718px;top:342px;width:459px;height:20px;background:#fff;"></div>
<div style="left:718px;top:361px;width:459px;height:1px;background:#e8e8e8;"></div>
<svg style="left:726px;top:318px;" width="16" height="16" viewBox="0 0 16 16"><rect x="0.500" y="0.500" width="15" height="15" fill="#a6caf0" stroke="#0000e0" stroke-width="1.200"/><path d="M4 1v4h4M8 5v3h-4v4M8 8h4v-4M12 8v4h-4v3M1 8h3" stroke="#0000e0" stroke-width="1.200" fill="none"/><rect x="7" y="6.500" width="2" height="2" fill="#ff0"/></svg>
<span style="left:747.3px;top:320.17px;font-size:12.5px;line-height:15px;color:#111;letter-spacing:-0.763px;">Mazes</span>
<span style="left:725.4px;top:345.34px;font-size:12px;line-height:14px;color:#000;letter-spacing:-0.384px;">File</span>
<span style="left:757.4px;top:345.34px;font-size:12px;line-height:14px;color:#000;letter-spacing:-0.436px;">Maze</span>
<svg style="left:1057px;top:321px;" width="12" height="12" viewBox="0 0 12 12"><path d="M0.500 5.500h10" stroke="#111" stroke-width="1.100"/></svg>
<svg style="left:1103px;top:321px;" width="11" height="11" viewBox="0 0 11 11"><rect x="0.600" y="0.600" width="9" height="9" rx="1" stroke="#111" stroke-width="1.100" fill="none"/></svg>
<svg style="left:1149px;top:321px;" width="11" height="11" viewBox="0 0 11 11"><path d="M0.500 0.500l10 10M10.500 0.500l-10 10" stroke="#111" stroke-width="1.100" fill="none"/></svg>
<svg style="left:797px;top:444px;" width="301" height="226" viewBox="-0.5 -0.5 301 226"><rect x="0" y="0" width="300" height="225" fill="#a6caf0"/><rect x="2.500" y="2.500" width="9" height="9" fill="#ffff00"/><rect x="287.500" y="212.500" width="9" height="9" fill="#008000"/><path d="M30 15H60M75 15H90M105 15H120M150 15H165M180 15H255M15 30H75M90 30H105M120 30H150M165 30H210M255 30H285M0 45H45M75 45H90M105 45H135M165 45H180M195 45H225M240 45H270M15 60H60M105 60H120M150 60H180M210 60H240M285 60H300M15 75H30M90 75H120M135 75H165M195 75H210M240 75H255M270 75H285M0 90H75M90 90H135M180 90H195M225 90H240M30 105H60M75 105H90M135 105H150M180 105H225M15 120H45M120 120H135M195 120H210M225 120H255M30 135H75M90 135H120M135 135H195M255 135H270M15 150H90M105 150H120M150 150H165M195 150H210M240 150H285M0 165H30M75 165H105M165 165H195M210 165H240M285 165H300M30 180H45M75 180H90M120 180H135M150 180H180M225 180H255M270 180H285M15 195H45M60 195H75M135 195H150M180 195H210M225 195H270M45 210H60M90 210H120M135 210H150M210 210H240M270 210H285M15 0V30M15 60V75M15 105V150M15 180V195M15 210V225M30 165V180M30 195V210M45 75V90M45 150V165M45 180V195M60 0V15M60 30V75M60 90V135M60 150V210M75 15V30M75 45V90M75 105V120M75 165V180M75 195V225M90 30V45M90 60V90M90 105V150M90 180V210M105 15V60M105 90V120M105 150V195M120 105V135M120 150V165M120 180V210M135 0V30M135 45V75M135 90V105M135 135V180M135 195V210M150 30V60M150 75V90M150 105V135M150 150V195M165 0V30M165 75V135M165 195V225M180 30V45M180 60V120M180 150V165M180 180V210M195 45V75M195 120V135M195 150V180M195 210V225M210 60V90M210 120V150M210 165V210M225 15V45M225 75V165M225 180V195M240 15V45M240 60V75M240 90V105M240 135V150M255 60V105M255 120V135M255 150V180M255 195V225M270 15V30M270 45V135M270 150V165M270 195V210M285 0V15M285 30V60M285 90V150M285 165V195" stroke="#0000ff" stroke-width="1" fill="none" stroke-linecap="square"/><rect x="0" y="0" width="300" height="225" fill="none" stroke="#0000ff" stroke-width="1"/></svg>
</div></body></html>
